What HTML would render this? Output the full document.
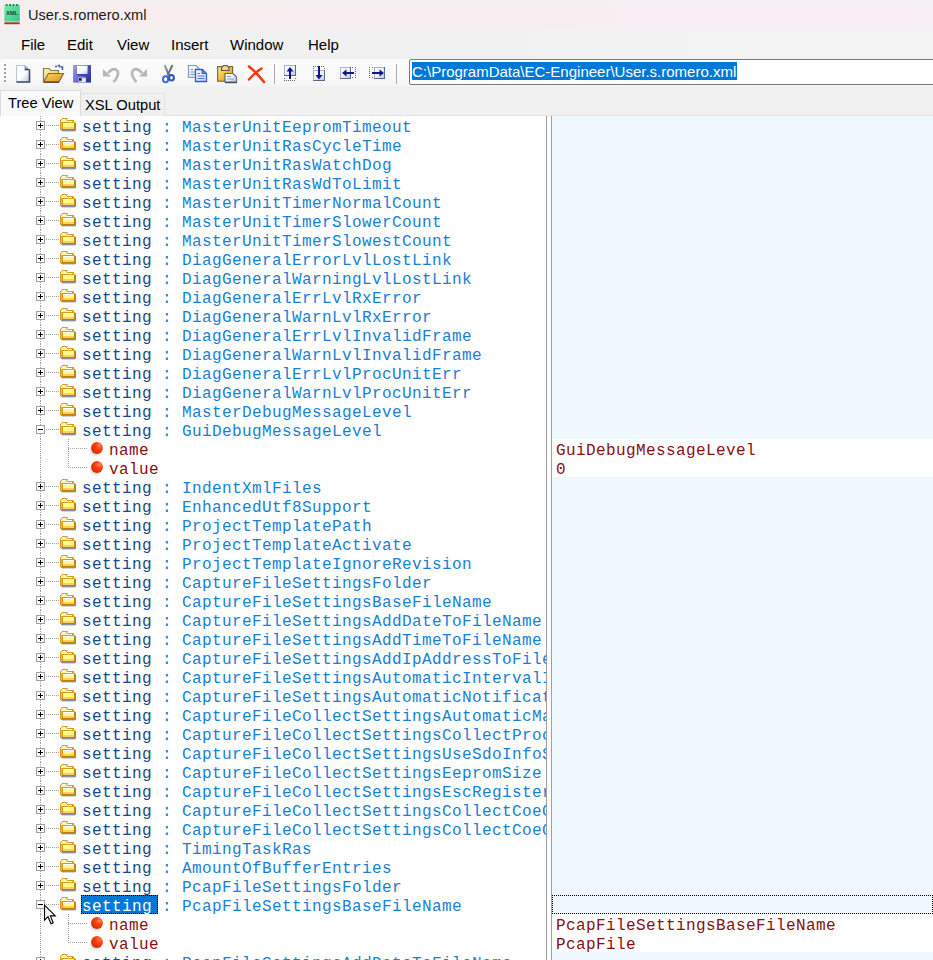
<!DOCTYPE html>
<html><head><meta charset="utf-8"><style>
*{box-sizing:border-box}
html,body{margin:0;padding:0}
body{width:933px;height:960px;overflow:hidden;position:relative;background:#f0f0f0;font-family:"Liberation Sans",sans-serif}
.abs{position:absolute}
#title{position:absolute;left:0;top:0;width:933px;height:29px;background:linear-gradient(90deg,#f8eeef 0%,#f8eef2 60%,#f8eef5 100%)}
#menu{position:absolute;left:0;top:29px;width:933px;height:30px;background:linear-gradient(90deg,#f0f0f0 0%,#f1f1f1 50%,#f3f3f3 78%,#f3f3f3 100%)}
.mi{position:absolute;top:0;font-size:15px;line-height:15px;color:#000;white-space:nowrap}
#tb{position:absolute;left:0;top:59px;width:725px;height:28px;background:linear-gradient(#fbfbfb,#f9f9f9 70%,#f3f3f3);border-top-left-radius:3px}
#tb2{position:absolute;left:725px;top:59px;width:208px;height:28px;background:#f3f3f3}
.tab{position:absolute;font-size:14.7px;line-height:15px;white-space:nowrap;color:#000}
#tree{position:absolute;left:0;top:116px;width:546px;height:844px;background:#fff;overflow:hidden}
#right{position:absolute;left:552px;top:116px;width:381px;height:844px;background:#f0f8ff;overflow:hidden}
.t{position:absolute;font-family:"Liberation Mono",monospace;font-size:16px;letter-spacing:0.4px;line-height:19px;height:19px;white-space:nowrap;padding-top:2.6px}
.el{color:#184888}
.nm{color:#1880d4}
.at{color:#861010}
.vl{color:#861010}
.vline{position:absolute;width:1px;background:repeating-linear-gradient(180deg,#a0a0a0 0 1px,transparent 1px 2px)}
.hline{position:absolute;height:1px;background:repeating-linear-gradient(90deg,#a0a0a0 0 1px,transparent 1px 2px)}
.box{position:absolute;width:9px;height:9px;border:1px solid #a0a0a0;background:#fff}
.box:before{content:"";position:absolute;left:1px;top:3px;width:5px;height:1px;background:#000}
.box.p:after{content:"";position:absolute;left:3px;top:1px;width:1px;height:5px;background:#000}
.fold{position:absolute}
.ball{position:absolute}
.wrow{position:absolute;left:0;width:381px;height:19px;background:#fff}
</style></head><body>

<div id="title"><div class="abs" style="left:0;top:0;width:933px;height:4px;background:linear-gradient(180deg,rgba(242,242,242,1),rgba(242,242,242,0))"></div>
<svg class="abs" style="left:3px;top:3px" width="19" height="23" viewBox="0 0 19 23">
<defs><linearGradient id="xg" x1="0" y1="0" x2="1" y2="1"><stop offset="0" stop-color="#78eab4"/><stop offset="1" stop-color="#38c282"/></linearGradient></defs>
<rect x="1.3" y="1.8" width="15.5" height="16.8" rx="0.6" fill="url(#xg)"/>
<rect x="2.8" y="1" width="1.8" height="2" rx="0.8" fill="#0e6a40"/><rect x="6.2" y="1" width="1.8" height="2" rx="0.8" fill="#0e6a40"/><rect x="9.6" y="1" width="1.8" height="2" rx="0.8" fill="#0e6a40"/><rect x="13" y="1" width="1.8" height="2" rx="0.8" fill="#0e6a40"/>
<text x="9" y="12.2" font-family="Liberation Sans" font-size="6.2" text-anchor="middle" fill="#0f4429" font-weight="bold" textLength="11.5" lengthAdjust="spacingAndGlyphs">XML</text>
<rect x="1.3" y="19.2" width="15.5" height="2" rx="0.8" fill="#904a18"/>
</svg>
<div class="abs" style="left:28px;top:8px;font-size:14.6px;line-height:15px;color:#1a1a1a;white-space:nowrap">User.s.romero.xml</div>
</div>

<div id="menu">
<div class="mi" style="left:21px;top:8px">File</div>
<div class="mi" style="left:67px;top:8px">Edit</div>
<div class="mi" style="left:117px;top:8px">View</div>
<div class="mi" style="left:171px;top:8px">Insert</div>
<div class="mi" style="left:230px;top:8px">Window</div>
<div class="mi" style="left:308px;top:8px">Help</div>
</div>
<div id="tb"></div><div id="tb2"></div>
<div class="abs" style="left:4px;top:64px;width:2px;height:2px;background:#a0a0a0;box-shadow:1px 1px 0 #fff"></div>
<div class="abs" style="left:4px;top:68px;width:2px;height:2px;background:#a0a0a0;box-shadow:1px 1px 0 #fff"></div>
<div class="abs" style="left:4px;top:72px;width:2px;height:2px;background:#a0a0a0;box-shadow:1px 1px 0 #fff"></div>
<div class="abs" style="left:4px;top:76px;width:2px;height:2px;background:#a0a0a0;box-shadow:1px 1px 0 #fff"></div>
<div class="abs" style="left:4px;top:80px;width:2px;height:2px;background:#a0a0a0;box-shadow:1px 1px 0 #fff"></div>
<div class="abs" style="left:15px;top:64px;line-height:0"><svg width="17" height="20" viewBox="0 0 17 20"><defs><linearGradient id="ng" x1="0" y1="0" x2="1" y2="1"><stop offset="0" stop-color="#fff"/><stop offset="0.55" stop-color="#fbfcfe"/><stop offset="1" stop-color="#b4c2de"/></linearGradient></defs><path d="M1.5 1.5 H10 L14.5 6 V18 H1.5 Z" fill="url(#ng)" stroke="#b8c4d8"/><path d="M14.5 5.5 V18 H1.5" fill="none" stroke="#3a4c6e" stroke-width="1.6"/><path d="M9.5 1 L15 6.5 H9.5 Z" fill="#8898b4"/><path d="M10 5.5 H14.5" stroke="#2e3e5e"/></svg></div>
<div class="abs" style="left:42px;top:64px;line-height:0"><svg width="23" height="20" viewBox="0 0 23 20"><defs><linearGradient id="ogb" x1="0" y1="0" x2="1" y2="1"><stop offset="0" stop-color="#fbf2a8"/><stop offset="1" stop-color="#e8c870"/></linearGradient><linearGradient id="og" x1="0" y1="0" x2="1" y2="1"><stop offset="0" stop-color="#ffd860"/><stop offset="1" stop-color="#e09018"/></linearGradient></defs><path d="M1.5 18 V4.5 H7 L9 6.5 H16.5 V10" fill="url(#ogb)" stroke="#8a7a5a" stroke-width="1.2"/><path d="M1.5 18 L6.5 9.5 H21.5 L17 18 Z" fill="url(#og)" stroke="#7a6a4a" stroke-width="1.2"/><path d="M2 18.2 H17" stroke="#4a3a1a" stroke-width="1.2"/><path d="M13 2.5 H15 M15.5 1.5 H17.5 V3.5 M18.5 3 H20.5 V6" stroke="#4a68a0" stroke-width="1.6" fill="none"/></svg></div>
<div class="abs" style="left:72px;top:64px;line-height:0"><svg width="20" height="20" viewBox="0 0 20 20"><defs><linearGradient id="sg" x1="0" y1="0" x2="1" y2="0.6"><stop offset="0" stop-color="#9c9cf8"/><stop offset="0.5" stop-color="#7070d8"/><stop offset="1" stop-color="#3434a0"/></linearGradient><linearGradient id="sl" x1="0" y1="0" x2="1" y2="1"><stop offset="0" stop-color="#fff"/><stop offset="0.6" stop-color="#f4f6fc"/><stop offset="1" stop-color="#b8c4e0"/></linearGradient></defs><rect x="1" y="1" width="18" height="17.6" fill="url(#sg)"/><rect x="5" y="1.8" width="10.5" height="8.4" fill="url(#sl)"/><rect x="5" y="10.2" width="10.5" height="1.2" fill="#2a3aa8"/><rect x="6.5" y="13.5" width="7.5" height="5" fill="#c8ccd8"/><rect x="7" y="14.2" width="2.5" height="2.5" fill="#111"/><rect x="10.5" y="14.5" width="2.6" height="3.4" fill="#e8f0fa"/><rect x="16.3" y="2.5" width="1.5" height="1.5" fill="#303078"/></svg></div>
<div class="abs" style="left:101px;top:64px;line-height:0"><svg width="20" height="20" viewBox="0 0 20 20"><path d="M7 9 Q11.5 4 15 5.5 Q18 7.5 16.5 12 Q15 15.5 12.5 18" fill="none" stroke="#b6b6b6" stroke-width="2.6"/><path d="M2 5 V12.5 H10 Z" fill="#b6b6b6"/></svg></div>
<div class="abs" style="left:129px;top:64px;line-height:0"><svg width="20" height="20" viewBox="0 0 20 20"><path d="M13 9 Q8.5 4 5 5.5 Q2 7.5 3.5 12 Q5 15.5 7.5 18" fill="none" stroke="#b6b6b6" stroke-width="2.6"/><path d="M18 5 V12.5 H10 Z" fill="#b6b6b6"/></svg></div>
<div class="abs" style="left:160px;top:64px;line-height:0"><svg width="16" height="20" viewBox="0 0 16 20"><defs><linearGradient id="cb" x1="0" y1="0" x2="1" y2="0"><stop offset="0" stop-color="#a0a8b8"/><stop offset="1" stop-color="#505a6a"/></linearGradient></defs><path d="M4.5 1 L9 11.5" stroke="url(#cb)" stroke-width="2"/><path d="M12.5 1 L7.5 11.5" stroke="#6a7486" stroke-width="2"/><ellipse cx="5.6" cy="15.2" rx="2.6" ry="3" fill="#fff" stroke="#3a6ad8" stroke-width="2"/><ellipse cx="11.5" cy="13.8" rx="2.4" ry="2.8" fill="#fff" stroke="#2c54b8" stroke-width="2"/></svg></div>
<div class="abs" style="left:187px;top:64px;line-height:0"><svg width="21" height="19" viewBox="0 0 21 19"><defs><linearGradient id="cp" x1="0" y1="0" x2="1" y2="1"><stop offset="0" stop-color="#fff"/><stop offset="1" stop-color="#c8d4ec"/></linearGradient></defs><path d="M1.5 1.5 H9 L12 4.5 V13.5 H1.5 Z" fill="url(#cp)" stroke="#8a9ab8" stroke-width="1.2"/><path d="M3.5 5.5 H6 M3.5 8 H9 M3.5 10.5 H9" stroke="#7aa0e0" stroke-width="1.1"/><path d="M8.5 5.5 H15.5 L19.5 9.5 V17.5 H8.5 Z" fill="url(#cp)" stroke="#3a5ec0" stroke-width="1.3"/><path d="M15 5.5 V9.5 H19.5" fill="#5a80d8" stroke="#3a5ec0"/><path d="M10.5 9.5 H13 M10.5 12 H17.5 M10.5 14.5 H17.5" stroke="#4a7ad8" stroke-width="1.2"/></svg></div>
<div class="abs" style="left:216px;top:64px;line-height:0"><svg width="23" height="20" viewBox="0 0 23 20"><defs><linearGradient id="pg" x1="0" y1="0" x2="1" y2="1"><stop offset="0" stop-color="#fbf0a0"/><stop offset="0.5" stop-color="#f4c030"/><stop offset="1" stop-color="#c88a10"/></linearGradient><linearGradient id="pd" x1="0" y1="0" x2="1" y2="1"><stop offset="0" stop-color="#fff"/><stop offset="0.5" stop-color="#eef2fa"/><stop offset="1" stop-color="#b0c0dc"/></linearGradient></defs><rect x="1.6" y="2.6" width="15" height="14.6" fill="url(#pg)" stroke="#7a6a4a" stroke-width="1.2"/><path d="M5.5 6.5 V4 L7.5 1.5 H11 L13 4 V6.5 Z" fill="#e8d890" stroke="#6a5a3a" stroke-width="1.2"/><path d="M9 17.8 V9.5 H17 L20.5 13 V18.2 Z" fill="url(#pd)" stroke="#5a6a88" stroke-width="1.2"/><path d="M9 18.6 H20.8" stroke="#4a4a4a" stroke-width="1.2"/><path d="M11 12.5 H15 M11 15 H18" stroke="#8a9ab8"/></svg></div>
<div class="abs" style="left:246px;top:64px;line-height:0"><svg width="20" height="20" viewBox="0 0 20 20"><path d="M3 2.5 Q10 8 18 18" stroke="#f23a0a" stroke-width="2.6" stroke-linecap="round" fill="none"/><path d="M15.5 4.5 Q9 8.5 3 15.5" stroke="#ee3a0a" stroke-width="2.4" stroke-linecap="round" fill="none"/></svg></div>
<div class="abs" style="left:283px;top:64px;line-height:0"><svg width="14" height="19" viewBox="0 0 14 19" shape-rendering="crispEdges"><defs><linearGradient id="bx" x1="0" y1="0" x2="1" y2="1"><stop offset="0" stop-color="#fff"/><stop offset="0.5" stop-color="#eef2fa"/><stop offset="1" stop-color="#b0c0dc"/></linearGradient></defs><rect x="1" y="1" width="12" height="11" fill="url(#bx)"/><rect x="1" y="1" width="12" height="1" fill="#a8b4cc"/><rect x="1" y="1" width="1" height="11" fill="#a8b4cc"/><rect x="12" y="1" width="1" height="11" fill="#5a6a8a"/><rect x="1" y="11" width="12" height="1" fill="#5a6a8a"/><path d="M1 14 h1 M12 14 h1 M1 16 h1 M3 16 h1 M5 16 h1 M7 16 h1 M9 16 h1 M11 16 h1" stroke="#606878" stroke-width="1"/><rect x="6" y="4" width="2" height="11" fill="#14148c"/><path d="M3.5 7.5 L7 3 L10.5 7.5 Z" fill="#14148c" shape-rendering="auto"/></svg></div>
<div class="abs" style="left:312px;top:64px;line-height:0"><svg width="14" height="19" viewBox="0 0 14 19" shape-rendering="crispEdges"><defs><linearGradient id="bx2" x1="0" y1="0" x2="1" y2="1"><stop offset="0" stop-color="#fff"/><stop offset="0.5" stop-color="#eef2fa"/><stop offset="1" stop-color="#b0c0dc"/></linearGradient></defs><path d="M1 2 h1 M3 2 h1 M5 2 h1 M7 2 h1 M9 2 h1 M11 2 h1 M1 4 h1 M12 4 h1" stroke="#606878" stroke-width="1"/><rect x="1" y="6" width="12" height="11" fill="url(#bx2)"/><rect x="1" y="6" width="12" height="1" fill="#a8b4cc"/><rect x="1" y="6" width="1" height="11" fill="#a8b4cc"/><rect x="12" y="6" width="1" height="11" fill="#5a6a8a"/><rect x="1" y="16" width="12" height="1" fill="#5a6a8a"/><rect x="6" y="2" width="2" height="11" fill="#14148c"/><path d="M3.5 11 L7 15.5 L10.5 11 Z" fill="#14148c" shape-rendering="auto"/></svg></div>
<div class="abs" style="left:339px;top:66px;line-height:0"><svg width="19" height="14" viewBox="0 0 19 14" shape-rendering="crispEdges"><defs><linearGradient id="bx3" x1="0" y1="0" x2="1" y2="1"><stop offset="0" stop-color="#fff"/><stop offset="0.5" stop-color="#eef2fa"/><stop offset="1" stop-color="#b0c0dc"/></linearGradient></defs><rect x="1" y="1" width="11" height="12" fill="url(#bx3)"/><rect x="1" y="1" width="11" height="1" fill="#a8b4cc"/><rect x="1" y="1" width="1" height="12" fill="#a8b4cc"/><rect x="11" y="1" width="1" height="12" fill="#5a6a8a"/><rect x="1" y="12" width="11" height="1" fill="#5a6a8a"/><path d="M13 1.5 h1 M16 1.5 h1 M16 3.5 h1 M16 5.5 h1 M16 7.5 h1 M16 9.5 h1 M13 11.5 h1 M16 11.5 h1" stroke="#606878"/><rect x="5" y="6" width="10" height="2" fill="#14148c"/><path d="M7.5 3.5 L3 7 L7.5 10.5 Z" fill="#14148c" shape-rendering="auto"/></svg></div>
<div class="abs" style="left:368px;top:66px;line-height:0"><svg width="19" height="14" viewBox="0 0 19 14" shape-rendering="crispEdges"><defs><linearGradient id="bx4" x1="0" y1="0" x2="1" y2="1"><stop offset="0" stop-color="#fff"/><stop offset="0.5" stop-color="#eef2fa"/><stop offset="1" stop-color="#b0c0dc"/></linearGradient></defs><path d="M1 1.5 h1 M4 1.5 h1 M1 3.5 h1 M1 5.5 h1 M1 7.5 h1 M1 9.5 h1 M1 11.5 h1 M4 11.5 h1" stroke="#606878"/><rect x="6" y="1" width="11" height="12" fill="url(#bx4)"/><rect x="6" y="1" width="11" height="1" fill="#a8b4cc"/><rect x="6" y="1" width="1" height="12" fill="#a8b4cc"/><rect x="16" y="1" width="1" height="12" fill="#5a6a8a"/><rect x="6" y="12" width="11" height="1" fill="#5a6a8a"/><rect x="4" y="6" width="10" height="2" fill="#14148c"/><path d="M11.5 3.5 L16 7 L11.5 10.5 Z" fill="#14148c" shape-rendering="auto"/></svg></div>
<div class="abs" style="left:274px;top:64px;width:1px;height:20px;background:#a8a8a8"></div>
<div class="abs" style="left:396px;top:64px;width:1px;height:20px;background:#a8a8a8"></div>
<div class="abs" style="left:409px;top:59px;width:530px;height:26px;background:#fff;border:1px solid #7a7a7a;border-radius:2px"></div>
<div class="abs" style="left:412px;top:62px;width:325px;height:18px;background:#0078d7"></div>
<div class="abs" style="left:412px;top:64px;font-size:15px;line-height:15px;color:#fff;white-space:nowrap">C:\ProgramData\EC-Engineer\User.s.romero.xml</div>
<div class="abs" style="left:0;top:115px;width:933px;height:1px;background:#e3e3e3"></div>
<div class="abs" style="left:80px;top:93px;width:85px;height:23px;background:#f0f0f0;border:1px solid #e3e3e3;border-bottom:none"></div>
<div class="abs" style="left:0;top:90px;width:81px;height:26px;background:#f9f9f9;border:1px solid #dcdcdc;border-bottom:none"></div>
<div class="tab" style="left:8px;top:96px">Tree View</div>
<div class="tab" style="left:85px;top:98px">XSL Output</div>
<div id="tree">
<div class="vline" style="left:40px;top:0px;height:19px"></div>
<div class="hline" style="left:46px;top:9px;width:14px"></div>
<div class="box p" style="left:36px;top:5px"></div>
<div class="fold" style="left:59px;top:1px;line-height:0"><svg class="fold" width="18" height="16" viewBox="59 117 18 16" shape-rendering="crispEdges"><rect x="75" y="123" width="1" height="7" fill="#5a6270" opacity=".75"/><rect x="61" y="130" width="15" height="1" fill="#5a6270" opacity=".7"/><rect x="62" y="131" width="13" height="1" fill="#9aa0aa" opacity=".45"/><rect x="66" y="118" width="2" height="1" fill="#a8b0c0"/><rect x="73" y="120" width="1" height="2" fill="#a8b0c0"/><rect x="62" y="118" width="4" height="1" fill="#d89a20"/><rect x="61" y="119" width="1" height="1" fill="#d89a20"/><rect x="62" y="119" width="4" height="1" fill="#fffbe0"/><rect x="66" y="119" width="1" height="1" fill="#d89a20"/><rect x="60" y="120" width="1" height="10" fill="#d89a20"/><rect x="61" y="120" width="6" height="2" fill="#fff6a0"/><rect x="67" y="120" width="6" height="1" fill="#d89a20"/><rect x="67" y="121" width="5" height="1" fill="#ffffff"/><rect x="72" y="121" width="1" height="1" fill="#d89a20"/><rect x="61" y="122" width="1" height="8" fill="#eab444"/><rect x="62" y="122" width="13" height="1" fill="#d89a20"/><rect x="62" y="123" width="1" height="7" fill="#d89a20"/><rect x="74" y="123" width="1" height="7" fill="#c88410"/><rect x="63" y="123" width="11" height="1" fill="#ffffff"/><rect x="63" y="124" width="11" height="3" fill="#fffa8c"/><rect x="63" y="127" width="11" height="2" fill="#ffd060"/><rect x="62" y="129" width="13" height="1" fill="#c07c08"/></svg></div>
<div class="t" style="left:82px;top:0px"><span class="el">setting</span><span class="nm"> : MasterUnitEepromTimeout</span></div>
<div class="vline" style="left:40px;top:19px;height:19px"></div>
<div class="hline" style="left:46px;top:28px;width:14px"></div>
<div class="box p" style="left:36px;top:24px"></div>
<div class="fold" style="left:59px;top:20px;line-height:0"><svg class="fold" width="18" height="16" viewBox="59 117 18 16" shape-rendering="crispEdges"><rect x="75" y="123" width="1" height="7" fill="#5a6270" opacity=".75"/><rect x="61" y="130" width="15" height="1" fill="#5a6270" opacity=".7"/><rect x="62" y="131" width="13" height="1" fill="#9aa0aa" opacity=".45"/><rect x="66" y="118" width="2" height="1" fill="#a8b0c0"/><rect x="73" y="120" width="1" height="2" fill="#a8b0c0"/><rect x="62" y="118" width="4" height="1" fill="#d89a20"/><rect x="61" y="119" width="1" height="1" fill="#d89a20"/><rect x="62" y="119" width="4" height="1" fill="#fffbe0"/><rect x="66" y="119" width="1" height="1" fill="#d89a20"/><rect x="60" y="120" width="1" height="10" fill="#d89a20"/><rect x="61" y="120" width="6" height="2" fill="#fff6a0"/><rect x="67" y="120" width="6" height="1" fill="#d89a20"/><rect x="67" y="121" width="5" height="1" fill="#ffffff"/><rect x="72" y="121" width="1" height="1" fill="#d89a20"/><rect x="61" y="122" width="1" height="8" fill="#eab444"/><rect x="62" y="122" width="13" height="1" fill="#d89a20"/><rect x="62" y="123" width="1" height="7" fill="#d89a20"/><rect x="74" y="123" width="1" height="7" fill="#c88410"/><rect x="63" y="123" width="11" height="1" fill="#ffffff"/><rect x="63" y="124" width="11" height="3" fill="#fffa8c"/><rect x="63" y="127" width="11" height="2" fill="#ffd060"/><rect x="62" y="129" width="13" height="1" fill="#c07c08"/></svg></div>
<div class="t" style="left:82px;top:19px"><span class="el">setting</span><span class="nm"> : MasterUnitRasCycleTime</span></div>
<div class="vline" style="left:40px;top:38px;height:19px"></div>
<div class="hline" style="left:46px;top:47px;width:14px"></div>
<div class="box p" style="left:36px;top:43px"></div>
<div class="fold" style="left:59px;top:39px;line-height:0"><svg class="fold" width="18" height="16" viewBox="59 117 18 16" shape-rendering="crispEdges"><rect x="75" y="123" width="1" height="7" fill="#5a6270" opacity=".75"/><rect x="61" y="130" width="15" height="1" fill="#5a6270" opacity=".7"/><rect x="62" y="131" width="13" height="1" fill="#9aa0aa" opacity=".45"/><rect x="66" y="118" width="2" height="1" fill="#a8b0c0"/><rect x="73" y="120" width="1" height="2" fill="#a8b0c0"/><rect x="62" y="118" width="4" height="1" fill="#d89a20"/><rect x="61" y="119" width="1" height="1" fill="#d89a20"/><rect x="62" y="119" width="4" height="1" fill="#fffbe0"/><rect x="66" y="119" width="1" height="1" fill="#d89a20"/><rect x="60" y="120" width="1" height="10" fill="#d89a20"/><rect x="61" y="120" width="6" height="2" fill="#fff6a0"/><rect x="67" y="120" width="6" height="1" fill="#d89a20"/><rect x="67" y="121" width="5" height="1" fill="#ffffff"/><rect x="72" y="121" width="1" height="1" fill="#d89a20"/><rect x="61" y="122" width="1" height="8" fill="#eab444"/><rect x="62" y="122" width="13" height="1" fill="#d89a20"/><rect x="62" y="123" width="1" height="7" fill="#d89a20"/><rect x="74" y="123" width="1" height="7" fill="#c88410"/><rect x="63" y="123" width="11" height="1" fill="#ffffff"/><rect x="63" y="124" width="11" height="3" fill="#fffa8c"/><rect x="63" y="127" width="11" height="2" fill="#ffd060"/><rect x="62" y="129" width="13" height="1" fill="#c07c08"/></svg></div>
<div class="t" style="left:82px;top:38px"><span class="el">setting</span><span class="nm"> : MasterUnitRasWatchDog</span></div>
<div class="vline" style="left:40px;top:57px;height:19px"></div>
<div class="hline" style="left:46px;top:66px;width:14px"></div>
<div class="box p" style="left:36px;top:62px"></div>
<div class="fold" style="left:59px;top:58px;line-height:0"><svg class="fold" width="18" height="16" viewBox="59 117 18 16" shape-rendering="crispEdges"><rect x="75" y="123" width="1" height="7" fill="#5a6270" opacity=".75"/><rect x="61" y="130" width="15" height="1" fill="#5a6270" opacity=".7"/><rect x="62" y="131" width="13" height="1" fill="#9aa0aa" opacity=".45"/><rect x="66" y="118" width="2" height="1" fill="#a8b0c0"/><rect x="73" y="120" width="1" height="2" fill="#a8b0c0"/><rect x="62" y="118" width="4" height="1" fill="#d89a20"/><rect x="61" y="119" width="1" height="1" fill="#d89a20"/><rect x="62" y="119" width="4" height="1" fill="#fffbe0"/><rect x="66" y="119" width="1" height="1" fill="#d89a20"/><rect x="60" y="120" width="1" height="10" fill="#d89a20"/><rect x="61" y="120" width="6" height="2" fill="#fff6a0"/><rect x="67" y="120" width="6" height="1" fill="#d89a20"/><rect x="67" y="121" width="5" height="1" fill="#ffffff"/><rect x="72" y="121" width="1" height="1" fill="#d89a20"/><rect x="61" y="122" width="1" height="8" fill="#eab444"/><rect x="62" y="122" width="13" height="1" fill="#d89a20"/><rect x="62" y="123" width="1" height="7" fill="#d89a20"/><rect x="74" y="123" width="1" height="7" fill="#c88410"/><rect x="63" y="123" width="11" height="1" fill="#ffffff"/><rect x="63" y="124" width="11" height="3" fill="#fffa8c"/><rect x="63" y="127" width="11" height="2" fill="#ffd060"/><rect x="62" y="129" width="13" height="1" fill="#c07c08"/></svg></div>
<div class="t" style="left:82px;top:57px"><span class="el">setting</span><span class="nm"> : MasterUnitRasWdToLimit</span></div>
<div class="vline" style="left:40px;top:76px;height:19px"></div>
<div class="hline" style="left:46px;top:85px;width:14px"></div>
<div class="box p" style="left:36px;top:81px"></div>
<div class="fold" style="left:59px;top:77px;line-height:0"><svg class="fold" width="18" height="16" viewBox="59 117 18 16" shape-rendering="crispEdges"><rect x="75" y="123" width="1" height="7" fill="#5a6270" opacity=".75"/><rect x="61" y="130" width="15" height="1" fill="#5a6270" opacity=".7"/><rect x="62" y="131" width="13" height="1" fill="#9aa0aa" opacity=".45"/><rect x="66" y="118" width="2" height="1" fill="#a8b0c0"/><rect x="73" y="120" width="1" height="2" fill="#a8b0c0"/><rect x="62" y="118" width="4" height="1" fill="#d89a20"/><rect x="61" y="119" width="1" height="1" fill="#d89a20"/><rect x="62" y="119" width="4" height="1" fill="#fffbe0"/><rect x="66" y="119" width="1" height="1" fill="#d89a20"/><rect x="60" y="120" width="1" height="10" fill="#d89a20"/><rect x="61" y="120" width="6" height="2" fill="#fff6a0"/><rect x="67" y="120" width="6" height="1" fill="#d89a20"/><rect x="67" y="121" width="5" height="1" fill="#ffffff"/><rect x="72" y="121" width="1" height="1" fill="#d89a20"/><rect x="61" y="122" width="1" height="8" fill="#eab444"/><rect x="62" y="122" width="13" height="1" fill="#d89a20"/><rect x="62" y="123" width="1" height="7" fill="#d89a20"/><rect x="74" y="123" width="1" height="7" fill="#c88410"/><rect x="63" y="123" width="11" height="1" fill="#ffffff"/><rect x="63" y="124" width="11" height="3" fill="#fffa8c"/><rect x="63" y="127" width="11" height="2" fill="#ffd060"/><rect x="62" y="129" width="13" height="1" fill="#c07c08"/></svg></div>
<div class="t" style="left:82px;top:76px"><span class="el">setting</span><span class="nm"> : MasterUnitTimerNormalCount</span></div>
<div class="vline" style="left:40px;top:95px;height:19px"></div>
<div class="hline" style="left:46px;top:104px;width:14px"></div>
<div class="box p" style="left:36px;top:100px"></div>
<div class="fold" style="left:59px;top:96px;line-height:0"><svg class="fold" width="18" height="16" viewBox="59 117 18 16" shape-rendering="crispEdges"><rect x="75" y="123" width="1" height="7" fill="#5a6270" opacity=".75"/><rect x="61" y="130" width="15" height="1" fill="#5a6270" opacity=".7"/><rect x="62" y="131" width="13" height="1" fill="#9aa0aa" opacity=".45"/><rect x="66" y="118" width="2" height="1" fill="#a8b0c0"/><rect x="73" y="120" width="1" height="2" fill="#a8b0c0"/><rect x="62" y="118" width="4" height="1" fill="#d89a20"/><rect x="61" y="119" width="1" height="1" fill="#d89a20"/><rect x="62" y="119" width="4" height="1" fill="#fffbe0"/><rect x="66" y="119" width="1" height="1" fill="#d89a20"/><rect x="60" y="120" width="1" height="10" fill="#d89a20"/><rect x="61" y="120" width="6" height="2" fill="#fff6a0"/><rect x="67" y="120" width="6" height="1" fill="#d89a20"/><rect x="67" y="121" width="5" height="1" fill="#ffffff"/><rect x="72" y="121" width="1" height="1" fill="#d89a20"/><rect x="61" y="122" width="1" height="8" fill="#eab444"/><rect x="62" y="122" width="13" height="1" fill="#d89a20"/><rect x="62" y="123" width="1" height="7" fill="#d89a20"/><rect x="74" y="123" width="1" height="7" fill="#c88410"/><rect x="63" y="123" width="11" height="1" fill="#ffffff"/><rect x="63" y="124" width="11" height="3" fill="#fffa8c"/><rect x="63" y="127" width="11" height="2" fill="#ffd060"/><rect x="62" y="129" width="13" height="1" fill="#c07c08"/></svg></div>
<div class="t" style="left:82px;top:95px"><span class="el">setting</span><span class="nm"> : MasterUnitTimerSlowerCount</span></div>
<div class="vline" style="left:40px;top:114px;height:19px"></div>
<div class="hline" style="left:46px;top:123px;width:14px"></div>
<div class="box p" style="left:36px;top:119px"></div>
<div class="fold" style="left:59px;top:115px;line-height:0"><svg class="fold" width="18" height="16" viewBox="59 117 18 16" shape-rendering="crispEdges"><rect x="75" y="123" width="1" height="7" fill="#5a6270" opacity=".75"/><rect x="61" y="130" width="15" height="1" fill="#5a6270" opacity=".7"/><rect x="62" y="131" width="13" height="1" fill="#9aa0aa" opacity=".45"/><rect x="66" y="118" width="2" height="1" fill="#a8b0c0"/><rect x="73" y="120" width="1" height="2" fill="#a8b0c0"/><rect x="62" y="118" width="4" height="1" fill="#d89a20"/><rect x="61" y="119" width="1" height="1" fill="#d89a20"/><rect x="62" y="119" width="4" height="1" fill="#fffbe0"/><rect x="66" y="119" width="1" height="1" fill="#d89a20"/><rect x="60" y="120" width="1" height="10" fill="#d89a20"/><rect x="61" y="120" width="6" height="2" fill="#fff6a0"/><rect x="67" y="120" width="6" height="1" fill="#d89a20"/><rect x="67" y="121" width="5" height="1" fill="#ffffff"/><rect x="72" y="121" width="1" height="1" fill="#d89a20"/><rect x="61" y="122" width="1" height="8" fill="#eab444"/><rect x="62" y="122" width="13" height="1" fill="#d89a20"/><rect x="62" y="123" width="1" height="7" fill="#d89a20"/><rect x="74" y="123" width="1" height="7" fill="#c88410"/><rect x="63" y="123" width="11" height="1" fill="#ffffff"/><rect x="63" y="124" width="11" height="3" fill="#fffa8c"/><rect x="63" y="127" width="11" height="2" fill="#ffd060"/><rect x="62" y="129" width="13" height="1" fill="#c07c08"/></svg></div>
<div class="t" style="left:82px;top:114px"><span class="el">setting</span><span class="nm"> : MasterUnitTimerSlowestCount</span></div>
<div class="vline" style="left:40px;top:133px;height:19px"></div>
<div class="hline" style="left:46px;top:142px;width:14px"></div>
<div class="box p" style="left:36px;top:138px"></div>
<div class="fold" style="left:59px;top:134px;line-height:0"><svg class="fold" width="18" height="16" viewBox="59 117 18 16" shape-rendering="crispEdges"><rect x="75" y="123" width="1" height="7" fill="#5a6270" opacity=".75"/><rect x="61" y="130" width="15" height="1" fill="#5a6270" opacity=".7"/><rect x="62" y="131" width="13" height="1" fill="#9aa0aa" opacity=".45"/><rect x="66" y="118" width="2" height="1" fill="#a8b0c0"/><rect x="73" y="120" width="1" height="2" fill="#a8b0c0"/><rect x="62" y="118" width="4" height="1" fill="#d89a20"/><rect x="61" y="119" width="1" height="1" fill="#d89a20"/><rect x="62" y="119" width="4" height="1" fill="#fffbe0"/><rect x="66" y="119" width="1" height="1" fill="#d89a20"/><rect x="60" y="120" width="1" height="10" fill="#d89a20"/><rect x="61" y="120" width="6" height="2" fill="#fff6a0"/><rect x="67" y="120" width="6" height="1" fill="#d89a20"/><rect x="67" y="121" width="5" height="1" fill="#ffffff"/><rect x="72" y="121" width="1" height="1" fill="#d89a20"/><rect x="61" y="122" width="1" height="8" fill="#eab444"/><rect x="62" y="122" width="13" height="1" fill="#d89a20"/><rect x="62" y="123" width="1" height="7" fill="#d89a20"/><rect x="74" y="123" width="1" height="7" fill="#c88410"/><rect x="63" y="123" width="11" height="1" fill="#ffffff"/><rect x="63" y="124" width="11" height="3" fill="#fffa8c"/><rect x="63" y="127" width="11" height="2" fill="#ffd060"/><rect x="62" y="129" width="13" height="1" fill="#c07c08"/></svg></div>
<div class="t" style="left:82px;top:133px"><span class="el">setting</span><span class="nm"> : DiagGeneralErrorLvlLostLink</span></div>
<div class="vline" style="left:40px;top:152px;height:19px"></div>
<div class="hline" style="left:46px;top:161px;width:14px"></div>
<div class="box p" style="left:36px;top:157px"></div>
<div class="fold" style="left:59px;top:153px;line-height:0"><svg class="fold" width="18" height="16" viewBox="59 117 18 16" shape-rendering="crispEdges"><rect x="75" y="123" width="1" height="7" fill="#5a6270" opacity=".75"/><rect x="61" y="130" width="15" height="1" fill="#5a6270" opacity=".7"/><rect x="62" y="131" width="13" height="1" fill="#9aa0aa" opacity=".45"/><rect x="66" y="118" width="2" height="1" fill="#a8b0c0"/><rect x="73" y="120" width="1" height="2" fill="#a8b0c0"/><rect x="62" y="118" width="4" height="1" fill="#d89a20"/><rect x="61" y="119" width="1" height="1" fill="#d89a20"/><rect x="62" y="119" width="4" height="1" fill="#fffbe0"/><rect x="66" y="119" width="1" height="1" fill="#d89a20"/><rect x="60" y="120" width="1" height="10" fill="#d89a20"/><rect x="61" y="120" width="6" height="2" fill="#fff6a0"/><rect x="67" y="120" width="6" height="1" fill="#d89a20"/><rect x="67" y="121" width="5" height="1" fill="#ffffff"/><rect x="72" y="121" width="1" height="1" fill="#d89a20"/><rect x="61" y="122" width="1" height="8" fill="#eab444"/><rect x="62" y="122" width="13" height="1" fill="#d89a20"/><rect x="62" y="123" width="1" height="7" fill="#d89a20"/><rect x="74" y="123" width="1" height="7" fill="#c88410"/><rect x="63" y="123" width="11" height="1" fill="#ffffff"/><rect x="63" y="124" width="11" height="3" fill="#fffa8c"/><rect x="63" y="127" width="11" height="2" fill="#ffd060"/><rect x="62" y="129" width="13" height="1" fill="#c07c08"/></svg></div>
<div class="t" style="left:82px;top:152px"><span class="el">setting</span><span class="nm"> : DiagGeneralWarningLvlLostLink</span></div>
<div class="vline" style="left:40px;top:171px;height:19px"></div>
<div class="hline" style="left:46px;top:180px;width:14px"></div>
<div class="box p" style="left:36px;top:176px"></div>
<div class="fold" style="left:59px;top:172px;line-height:0"><svg class="fold" width="18" height="16" viewBox="59 117 18 16" shape-rendering="crispEdges"><rect x="75" y="123" width="1" height="7" fill="#5a6270" opacity=".75"/><rect x="61" y="130" width="15" height="1" fill="#5a6270" opacity=".7"/><rect x="62" y="131" width="13" height="1" fill="#9aa0aa" opacity=".45"/><rect x="66" y="118" width="2" height="1" fill="#a8b0c0"/><rect x="73" y="120" width="1" height="2" fill="#a8b0c0"/><rect x="62" y="118" width="4" height="1" fill="#d89a20"/><rect x="61" y="119" width="1" height="1" fill="#d89a20"/><rect x="62" y="119" width="4" height="1" fill="#fffbe0"/><rect x="66" y="119" width="1" height="1" fill="#d89a20"/><rect x="60" y="120" width="1" height="10" fill="#d89a20"/><rect x="61" y="120" width="6" height="2" fill="#fff6a0"/><rect x="67" y="120" width="6" height="1" fill="#d89a20"/><rect x="67" y="121" width="5" height="1" fill="#ffffff"/><rect x="72" y="121" width="1" height="1" fill="#d89a20"/><rect x="61" y="122" width="1" height="8" fill="#eab444"/><rect x="62" y="122" width="13" height="1" fill="#d89a20"/><rect x="62" y="123" width="1" height="7" fill="#d89a20"/><rect x="74" y="123" width="1" height="7" fill="#c88410"/><rect x="63" y="123" width="11" height="1" fill="#ffffff"/><rect x="63" y="124" width="11" height="3" fill="#fffa8c"/><rect x="63" y="127" width="11" height="2" fill="#ffd060"/><rect x="62" y="129" width="13" height="1" fill="#c07c08"/></svg></div>
<div class="t" style="left:82px;top:171px"><span class="el">setting</span><span class="nm"> : DiagGeneralErrLvlRxError</span></div>
<div class="vline" style="left:40px;top:190px;height:19px"></div>
<div class="hline" style="left:46px;top:199px;width:14px"></div>
<div class="box p" style="left:36px;top:195px"></div>
<div class="fold" style="left:59px;top:191px;line-height:0"><svg class="fold" width="18" height="16" viewBox="59 117 18 16" shape-rendering="crispEdges"><rect x="75" y="123" width="1" height="7" fill="#5a6270" opacity=".75"/><rect x="61" y="130" width="15" height="1" fill="#5a6270" opacity=".7"/><rect x="62" y="131" width="13" height="1" fill="#9aa0aa" opacity=".45"/><rect x="66" y="118" width="2" height="1" fill="#a8b0c0"/><rect x="73" y="120" width="1" height="2" fill="#a8b0c0"/><rect x="62" y="118" width="4" height="1" fill="#d89a20"/><rect x="61" y="119" width="1" height="1" fill="#d89a20"/><rect x="62" y="119" width="4" height="1" fill="#fffbe0"/><rect x="66" y="119" width="1" height="1" fill="#d89a20"/><rect x="60" y="120" width="1" height="10" fill="#d89a20"/><rect x="61" y="120" width="6" height="2" fill="#fff6a0"/><rect x="67" y="120" width="6" height="1" fill="#d89a20"/><rect x="67" y="121" width="5" height="1" fill="#ffffff"/><rect x="72" y="121" width="1" height="1" fill="#d89a20"/><rect x="61" y="122" width="1" height="8" fill="#eab444"/><rect x="62" y="122" width="13" height="1" fill="#d89a20"/><rect x="62" y="123" width="1" height="7" fill="#d89a20"/><rect x="74" y="123" width="1" height="7" fill="#c88410"/><rect x="63" y="123" width="11" height="1" fill="#ffffff"/><rect x="63" y="124" width="11" height="3" fill="#fffa8c"/><rect x="63" y="127" width="11" height="2" fill="#ffd060"/><rect x="62" y="129" width="13" height="1" fill="#c07c08"/></svg></div>
<div class="t" style="left:82px;top:190px"><span class="el">setting</span><span class="nm"> : DiagGeneralWarnLvlRxError</span></div>
<div class="vline" style="left:40px;top:209px;height:19px"></div>
<div class="hline" style="left:46px;top:218px;width:14px"></div>
<div class="box p" style="left:36px;top:214px"></div>
<div class="fold" style="left:59px;top:210px;line-height:0"><svg class="fold" width="18" height="16" viewBox="59 117 18 16" shape-rendering="crispEdges"><rect x="75" y="123" width="1" height="7" fill="#5a6270" opacity=".75"/><rect x="61" y="130" width="15" height="1" fill="#5a6270" opacity=".7"/><rect x="62" y="131" width="13" height="1" fill="#9aa0aa" opacity=".45"/><rect x="66" y="118" width="2" height="1" fill="#a8b0c0"/><rect x="73" y="120" width="1" height="2" fill="#a8b0c0"/><rect x="62" y="118" width="4" height="1" fill="#d89a20"/><rect x="61" y="119" width="1" height="1" fill="#d89a20"/><rect x="62" y="119" width="4" height="1" fill="#fffbe0"/><rect x="66" y="119" width="1" height="1" fill="#d89a20"/><rect x="60" y="120" width="1" height="10" fill="#d89a20"/><rect x="61" y="120" width="6" height="2" fill="#fff6a0"/><rect x="67" y="120" width="6" height="1" fill="#d89a20"/><rect x="67" y="121" width="5" height="1" fill="#ffffff"/><rect x="72" y="121" width="1" height="1" fill="#d89a20"/><rect x="61" y="122" width="1" height="8" fill="#eab444"/><rect x="62" y="122" width="13" height="1" fill="#d89a20"/><rect x="62" y="123" width="1" height="7" fill="#d89a20"/><rect x="74" y="123" width="1" height="7" fill="#c88410"/><rect x="63" y="123" width="11" height="1" fill="#ffffff"/><rect x="63" y="124" width="11" height="3" fill="#fffa8c"/><rect x="63" y="127" width="11" height="2" fill="#ffd060"/><rect x="62" y="129" width="13" height="1" fill="#c07c08"/></svg></div>
<div class="t" style="left:82px;top:209px"><span class="el">setting</span><span class="nm"> : DiagGeneralErrLvlInvalidFrame</span></div>
<div class="vline" style="left:40px;top:228px;height:19px"></div>
<div class="hline" style="left:46px;top:237px;width:14px"></div>
<div class="box p" style="left:36px;top:233px"></div>
<div class="fold" style="left:59px;top:229px;line-height:0"><svg class="fold" width="18" height="16" viewBox="59 117 18 16" shape-rendering="crispEdges"><rect x="75" y="123" width="1" height="7" fill="#5a6270" opacity=".75"/><rect x="61" y="130" width="15" height="1" fill="#5a6270" opacity=".7"/><rect x="62" y="131" width="13" height="1" fill="#9aa0aa" opacity=".45"/><rect x="66" y="118" width="2" height="1" fill="#a8b0c0"/><rect x="73" y="120" width="1" height="2" fill="#a8b0c0"/><rect x="62" y="118" width="4" height="1" fill="#d89a20"/><rect x="61" y="119" width="1" height="1" fill="#d89a20"/><rect x="62" y="119" width="4" height="1" fill="#fffbe0"/><rect x="66" y="119" width="1" height="1" fill="#d89a20"/><rect x="60" y="120" width="1" height="10" fill="#d89a20"/><rect x="61" y="120" width="6" height="2" fill="#fff6a0"/><rect x="67" y="120" width="6" height="1" fill="#d89a20"/><rect x="67" y="121" width="5" height="1" fill="#ffffff"/><rect x="72" y="121" width="1" height="1" fill="#d89a20"/><rect x="61" y="122" width="1" height="8" fill="#eab444"/><rect x="62" y="122" width="13" height="1" fill="#d89a20"/><rect x="62" y="123" width="1" height="7" fill="#d89a20"/><rect x="74" y="123" width="1" height="7" fill="#c88410"/><rect x="63" y="123" width="11" height="1" fill="#ffffff"/><rect x="63" y="124" width="11" height="3" fill="#fffa8c"/><rect x="63" y="127" width="11" height="2" fill="#ffd060"/><rect x="62" y="129" width="13" height="1" fill="#c07c08"/></svg></div>
<div class="t" style="left:82px;top:228px"><span class="el">setting</span><span class="nm"> : DiagGeneralWarnLvlInvalidFrame</span></div>
<div class="vline" style="left:40px;top:247px;height:19px"></div>
<div class="hline" style="left:46px;top:256px;width:14px"></div>
<div class="box p" style="left:36px;top:252px"></div>
<div class="fold" style="left:59px;top:248px;line-height:0"><svg class="fold" width="18" height="16" viewBox="59 117 18 16" shape-rendering="crispEdges"><rect x="75" y="123" width="1" height="7" fill="#5a6270" opacity=".75"/><rect x="61" y="130" width="15" height="1" fill="#5a6270" opacity=".7"/><rect x="62" y="131" width="13" height="1" fill="#9aa0aa" opacity=".45"/><rect x="66" y="118" width="2" height="1" fill="#a8b0c0"/><rect x="73" y="120" width="1" height="2" fill="#a8b0c0"/><rect x="62" y="118" width="4" height="1" fill="#d89a20"/><rect x="61" y="119" width="1" height="1" fill="#d89a20"/><rect x="62" y="119" width="4" height="1" fill="#fffbe0"/><rect x="66" y="119" width="1" height="1" fill="#d89a20"/><rect x="60" y="120" width="1" height="10" fill="#d89a20"/><rect x="61" y="120" width="6" height="2" fill="#fff6a0"/><rect x="67" y="120" width="6" height="1" fill="#d89a20"/><rect x="67" y="121" width="5" height="1" fill="#ffffff"/><rect x="72" y="121" width="1" height="1" fill="#d89a20"/><rect x="61" y="122" width="1" height="8" fill="#eab444"/><rect x="62" y="122" width="13" height="1" fill="#d89a20"/><rect x="62" y="123" width="1" height="7" fill="#d89a20"/><rect x="74" y="123" width="1" height="7" fill="#c88410"/><rect x="63" y="123" width="11" height="1" fill="#ffffff"/><rect x="63" y="124" width="11" height="3" fill="#fffa8c"/><rect x="63" y="127" width="11" height="2" fill="#ffd060"/><rect x="62" y="129" width="13" height="1" fill="#c07c08"/></svg></div>
<div class="t" style="left:82px;top:247px"><span class="el">setting</span><span class="nm"> : DiagGeneralErrLvlProcUnitErr</span></div>
<div class="vline" style="left:40px;top:266px;height:19px"></div>
<div class="hline" style="left:46px;top:275px;width:14px"></div>
<div class="box p" style="left:36px;top:271px"></div>
<div class="fold" style="left:59px;top:267px;line-height:0"><svg class="fold" width="18" height="16" viewBox="59 117 18 16" shape-rendering="crispEdges"><rect x="75" y="123" width="1" height="7" fill="#5a6270" opacity=".75"/><rect x="61" y="130" width="15" height="1" fill="#5a6270" opacity=".7"/><rect x="62" y="131" width="13" height="1" fill="#9aa0aa" opacity=".45"/><rect x="66" y="118" width="2" height="1" fill="#a8b0c0"/><rect x="73" y="120" width="1" height="2" fill="#a8b0c0"/><rect x="62" y="118" width="4" height="1" fill="#d89a20"/><rect x="61" y="119" width="1" height="1" fill="#d89a20"/><rect x="62" y="119" width="4" height="1" fill="#fffbe0"/><rect x="66" y="119" width="1" height="1" fill="#d89a20"/><rect x="60" y="120" width="1" height="10" fill="#d89a20"/><rect x="61" y="120" width="6" height="2" fill="#fff6a0"/><rect x="67" y="120" width="6" height="1" fill="#d89a20"/><rect x="67" y="121" width="5" height="1" fill="#ffffff"/><rect x="72" y="121" width="1" height="1" fill="#d89a20"/><rect x="61" y="122" width="1" height="8" fill="#eab444"/><rect x="62" y="122" width="13" height="1" fill="#d89a20"/><rect x="62" y="123" width="1" height="7" fill="#d89a20"/><rect x="74" y="123" width="1" height="7" fill="#c88410"/><rect x="63" y="123" width="11" height="1" fill="#ffffff"/><rect x="63" y="124" width="11" height="3" fill="#fffa8c"/><rect x="63" y="127" width="11" height="2" fill="#ffd060"/><rect x="62" y="129" width="13" height="1" fill="#c07c08"/></svg></div>
<div class="t" style="left:82px;top:266px"><span class="el">setting</span><span class="nm"> : DiagGeneralWarnLvlProcUnitErr</span></div>
<div class="vline" style="left:40px;top:285px;height:19px"></div>
<div class="hline" style="left:46px;top:294px;width:14px"></div>
<div class="box p" style="left:36px;top:290px"></div>
<div class="fold" style="left:59px;top:286px;line-height:0"><svg class="fold" width="18" height="16" viewBox="59 117 18 16" shape-rendering="crispEdges"><rect x="75" y="123" width="1" height="7" fill="#5a6270" opacity=".75"/><rect x="61" y="130" width="15" height="1" fill="#5a6270" opacity=".7"/><rect x="62" y="131" width="13" height="1" fill="#9aa0aa" opacity=".45"/><rect x="66" y="118" width="2" height="1" fill="#a8b0c0"/><rect x="73" y="120" width="1" height="2" fill="#a8b0c0"/><rect x="62" y="118" width="4" height="1" fill="#d89a20"/><rect x="61" y="119" width="1" height="1" fill="#d89a20"/><rect x="62" y="119" width="4" height="1" fill="#fffbe0"/><rect x="66" y="119" width="1" height="1" fill="#d89a20"/><rect x="60" y="120" width="1" height="10" fill="#d89a20"/><rect x="61" y="120" width="6" height="2" fill="#fff6a0"/><rect x="67" y="120" width="6" height="1" fill="#d89a20"/><rect x="67" y="121" width="5" height="1" fill="#ffffff"/><rect x="72" y="121" width="1" height="1" fill="#d89a20"/><rect x="61" y="122" width="1" height="8" fill="#eab444"/><rect x="62" y="122" width="13" height="1" fill="#d89a20"/><rect x="62" y="123" width="1" height="7" fill="#d89a20"/><rect x="74" y="123" width="1" height="7" fill="#c88410"/><rect x="63" y="123" width="11" height="1" fill="#ffffff"/><rect x="63" y="124" width="11" height="3" fill="#fffa8c"/><rect x="63" y="127" width="11" height="2" fill="#ffd060"/><rect x="62" y="129" width="13" height="1" fill="#c07c08"/></svg></div>
<div class="t" style="left:82px;top:285px"><span class="el">setting</span><span class="nm"> : MasterDebugMessageLevel</span></div>
<div class="vline" style="left:40px;top:304px;height:19px"></div>
<div class="hline" style="left:46px;top:313px;width:14px"></div>
<div class="box" style="left:36px;top:309px"></div>
<div class="fold" style="left:59px;top:305px;line-height:0"><svg class="fold" width="18" height="16" viewBox="59 117 18 16" shape-rendering="crispEdges"><rect x="75" y="123" width="1" height="7" fill="#5a6270" opacity=".75"/><rect x="61" y="130" width="15" height="1" fill="#5a6270" opacity=".7"/><rect x="62" y="131" width="13" height="1" fill="#9aa0aa" opacity=".45"/><rect x="66" y="118" width="2" height="1" fill="#a8b0c0"/><rect x="73" y="120" width="1" height="2" fill="#a8b0c0"/><rect x="62" y="118" width="4" height="1" fill="#d89a20"/><rect x="61" y="119" width="1" height="1" fill="#d89a20"/><rect x="62" y="119" width="4" height="1" fill="#fffbe0"/><rect x="66" y="119" width="1" height="1" fill="#d89a20"/><rect x="60" y="120" width="1" height="10" fill="#d89a20"/><rect x="61" y="120" width="6" height="2" fill="#fff6a0"/><rect x="67" y="120" width="6" height="1" fill="#d89a20"/><rect x="67" y="121" width="5" height="1" fill="#ffffff"/><rect x="72" y="121" width="1" height="1" fill="#d89a20"/><rect x="61" y="122" width="1" height="8" fill="#eab444"/><rect x="62" y="122" width="13" height="1" fill="#d89a20"/><rect x="62" y="123" width="1" height="7" fill="#d89a20"/><rect x="74" y="123" width="1" height="7" fill="#c88410"/><rect x="63" y="123" width="11" height="1" fill="#ffffff"/><rect x="63" y="124" width="11" height="3" fill="#fffa8c"/><rect x="63" y="127" width="11" height="2" fill="#ffd060"/><rect x="62" y="129" width="13" height="1" fill="#c07c08"/></svg></div>
<div class="t" style="left:82px;top:304px"><span class="el">setting</span><span class="nm"> : GuiDebugMessageLevel</span></div>
<div class="vline" style="left:40px;top:323px;height:19px"></div>
<div class="hline" style="left:68px;top:332px;width:19px"></div>
<div class="ball" style="left:89px;top:324px;line-height:0"><svg class="ball" width="16" height="18" viewBox="0 0 16 18"><defs><radialGradient id="bg" cx="0.72" cy="0.28" r="0.85"><stop offset="0" stop-color="#ff7a5a"/><stop offset="0.45" stop-color="#ff3c06"/><stop offset="1" stop-color="#c42c02"/></radialGradient><radialGradient id="sh" cx="0.5" cy="0.5" r="0.5"><stop offset="0" stop-color="#000" stop-opacity="0.32"/><stop offset="0.6" stop-color="#000" stop-opacity="0.15"/><stop offset="1" stop-color="#000" stop-opacity="0"/></radialGradient></defs><ellipse cx="6.8" cy="10.2" rx="7" ry="7" fill="url(#sh)"/><circle cx="8" cy="8" r="5.9" fill="url(#bg)"/></svg></div>
<div class="t at" style="left:109px;top:323px">name</div>
<div class="vline" style="left:40px;top:342px;height:19px"></div>
<div class="hline" style="left:68px;top:351px;width:19px"></div>
<div class="ball" style="left:89px;top:343px;line-height:0"><svg class="ball" width="16" height="18" viewBox="0 0 16 18"><defs><radialGradient id="bg" cx="0.72" cy="0.28" r="0.85"><stop offset="0" stop-color="#ff7a5a"/><stop offset="0.45" stop-color="#ff3c06"/><stop offset="1" stop-color="#c42c02"/></radialGradient><radialGradient id="sh" cx="0.5" cy="0.5" r="0.5"><stop offset="0" stop-color="#000" stop-opacity="0.32"/><stop offset="0.6" stop-color="#000" stop-opacity="0.15"/><stop offset="1" stop-color="#000" stop-opacity="0"/></radialGradient></defs><ellipse cx="6.8" cy="10.2" rx="7" ry="7" fill="url(#sh)"/><circle cx="8" cy="8" r="5.9" fill="url(#bg)"/></svg></div>
<div class="t at" style="left:109px;top:342px">value</div>
<div class="vline" style="left:40px;top:361px;height:19px"></div>
<div class="hline" style="left:46px;top:370px;width:14px"></div>
<div class="box p" style="left:36px;top:366px"></div>
<div class="fold" style="left:59px;top:362px;line-height:0"><svg class="fold" width="18" height="16" viewBox="59 117 18 16" shape-rendering="crispEdges"><rect x="75" y="123" width="1" height="7" fill="#5a6270" opacity=".75"/><rect x="61" y="130" width="15" height="1" fill="#5a6270" opacity=".7"/><rect x="62" y="131" width="13" height="1" fill="#9aa0aa" opacity=".45"/><rect x="66" y="118" width="2" height="1" fill="#a8b0c0"/><rect x="73" y="120" width="1" height="2" fill="#a8b0c0"/><rect x="62" y="118" width="4" height="1" fill="#d89a20"/><rect x="61" y="119" width="1" height="1" fill="#d89a20"/><rect x="62" y="119" width="4" height="1" fill="#fffbe0"/><rect x="66" y="119" width="1" height="1" fill="#d89a20"/><rect x="60" y="120" width="1" height="10" fill="#d89a20"/><rect x="61" y="120" width="6" height="2" fill="#fff6a0"/><rect x="67" y="120" width="6" height="1" fill="#d89a20"/><rect x="67" y="121" width="5" height="1" fill="#ffffff"/><rect x="72" y="121" width="1" height="1" fill="#d89a20"/><rect x="61" y="122" width="1" height="8" fill="#eab444"/><rect x="62" y="122" width="13" height="1" fill="#d89a20"/><rect x="62" y="123" width="1" height="7" fill="#d89a20"/><rect x="74" y="123" width="1" height="7" fill="#c88410"/><rect x="63" y="123" width="11" height="1" fill="#ffffff"/><rect x="63" y="124" width="11" height="3" fill="#fffa8c"/><rect x="63" y="127" width="11" height="2" fill="#ffd060"/><rect x="62" y="129" width="13" height="1" fill="#c07c08"/></svg></div>
<div class="t" style="left:82px;top:361px"><span class="el">setting</span><span class="nm"> : IndentXmlFiles</span></div>
<div class="vline" style="left:40px;top:380px;height:19px"></div>
<div class="hline" style="left:46px;top:389px;width:14px"></div>
<div class="box p" style="left:36px;top:385px"></div>
<div class="fold" style="left:59px;top:381px;line-height:0"><svg class="fold" width="18" height="16" viewBox="59 117 18 16" shape-rendering="crispEdges"><rect x="75" y="123" width="1" height="7" fill="#5a6270" opacity=".75"/><rect x="61" y="130" width="15" height="1" fill="#5a6270" opacity=".7"/><rect x="62" y="131" width="13" height="1" fill="#9aa0aa" opacity=".45"/><rect x="66" y="118" width="2" height="1" fill="#a8b0c0"/><rect x="73" y="120" width="1" height="2" fill="#a8b0c0"/><rect x="62" y="118" width="4" height="1" fill="#d89a20"/><rect x="61" y="119" width="1" height="1" fill="#d89a20"/><rect x="62" y="119" width="4" height="1" fill="#fffbe0"/><rect x="66" y="119" width="1" height="1" fill="#d89a20"/><rect x="60" y="120" width="1" height="10" fill="#d89a20"/><rect x="61" y="120" width="6" height="2" fill="#fff6a0"/><rect x="67" y="120" width="6" height="1" fill="#d89a20"/><rect x="67" y="121" width="5" height="1" fill="#ffffff"/><rect x="72" y="121" width="1" height="1" fill="#d89a20"/><rect x="61" y="122" width="1" height="8" fill="#eab444"/><rect x="62" y="122" width="13" height="1" fill="#d89a20"/><rect x="62" y="123" width="1" height="7" fill="#d89a20"/><rect x="74" y="123" width="1" height="7" fill="#c88410"/><rect x="63" y="123" width="11" height="1" fill="#ffffff"/><rect x="63" y="124" width="11" height="3" fill="#fffa8c"/><rect x="63" y="127" width="11" height="2" fill="#ffd060"/><rect x="62" y="129" width="13" height="1" fill="#c07c08"/></svg></div>
<div class="t" style="left:82px;top:380px"><span class="el">setting</span><span class="nm"> : EnhancedUtf8Support</span></div>
<div class="vline" style="left:40px;top:399px;height:19px"></div>
<div class="hline" style="left:46px;top:408px;width:14px"></div>
<div class="box p" style="left:36px;top:404px"></div>
<div class="fold" style="left:59px;top:400px;line-height:0"><svg class="fold" width="18" height="16" viewBox="59 117 18 16" shape-rendering="crispEdges"><rect x="75" y="123" width="1" height="7" fill="#5a6270" opacity=".75"/><rect x="61" y="130" width="15" height="1" fill="#5a6270" opacity=".7"/><rect x="62" y="131" width="13" height="1" fill="#9aa0aa" opacity=".45"/><rect x="66" y="118" width="2" height="1" fill="#a8b0c0"/><rect x="73" y="120" width="1" height="2" fill="#a8b0c0"/><rect x="62" y="118" width="4" height="1" fill="#d89a20"/><rect x="61" y="119" width="1" height="1" fill="#d89a20"/><rect x="62" y="119" width="4" height="1" fill="#fffbe0"/><rect x="66" y="119" width="1" height="1" fill="#d89a20"/><rect x="60" y="120" width="1" height="10" fill="#d89a20"/><rect x="61" y="120" width="6" height="2" fill="#fff6a0"/><rect x="67" y="120" width="6" height="1" fill="#d89a20"/><rect x="67" y="121" width="5" height="1" fill="#ffffff"/><rect x="72" y="121" width="1" height="1" fill="#d89a20"/><rect x="61" y="122" width="1" height="8" fill="#eab444"/><rect x="62" y="122" width="13" height="1" fill="#d89a20"/><rect x="62" y="123" width="1" height="7" fill="#d89a20"/><rect x="74" y="123" width="1" height="7" fill="#c88410"/><rect x="63" y="123" width="11" height="1" fill="#ffffff"/><rect x="63" y="124" width="11" height="3" fill="#fffa8c"/><rect x="63" y="127" width="11" height="2" fill="#ffd060"/><rect x="62" y="129" width="13" height="1" fill="#c07c08"/></svg></div>
<div class="t" style="left:82px;top:399px"><span class="el">setting</span><span class="nm"> : ProjectTemplatePath</span></div>
<div class="vline" style="left:40px;top:418px;height:19px"></div>
<div class="hline" style="left:46px;top:427px;width:14px"></div>
<div class="box p" style="left:36px;top:423px"></div>
<div class="fold" style="left:59px;top:419px;line-height:0"><svg class="fold" width="18" height="16" viewBox="59 117 18 16" shape-rendering="crispEdges"><rect x="75" y="123" width="1" height="7" fill="#5a6270" opacity=".75"/><rect x="61" y="130" width="15" height="1" fill="#5a6270" opacity=".7"/><rect x="62" y="131" width="13" height="1" fill="#9aa0aa" opacity=".45"/><rect x="66" y="118" width="2" height="1" fill="#a8b0c0"/><rect x="73" y="120" width="1" height="2" fill="#a8b0c0"/><rect x="62" y="118" width="4" height="1" fill="#d89a20"/><rect x="61" y="119" width="1" height="1" fill="#d89a20"/><rect x="62" y="119" width="4" height="1" fill="#fffbe0"/><rect x="66" y="119" width="1" height="1" fill="#d89a20"/><rect x="60" y="120" width="1" height="10" fill="#d89a20"/><rect x="61" y="120" width="6" height="2" fill="#fff6a0"/><rect x="67" y="120" width="6" height="1" fill="#d89a20"/><rect x="67" y="121" width="5" height="1" fill="#ffffff"/><rect x="72" y="121" width="1" height="1" fill="#d89a20"/><rect x="61" y="122" width="1" height="8" fill="#eab444"/><rect x="62" y="122" width="13" height="1" fill="#d89a20"/><rect x="62" y="123" width="1" height="7" fill="#d89a20"/><rect x="74" y="123" width="1" height="7" fill="#c88410"/><rect x="63" y="123" width="11" height="1" fill="#ffffff"/><rect x="63" y="124" width="11" height="3" fill="#fffa8c"/><rect x="63" y="127" width="11" height="2" fill="#ffd060"/><rect x="62" y="129" width="13" height="1" fill="#c07c08"/></svg></div>
<div class="t" style="left:82px;top:418px"><span class="el">setting</span><span class="nm"> : ProjectTemplateActivate</span></div>
<div class="vline" style="left:40px;top:437px;height:19px"></div>
<div class="hline" style="left:46px;top:446px;width:14px"></div>
<div class="box p" style="left:36px;top:442px"></div>
<div class="fold" style="left:59px;top:438px;line-height:0"><svg class="fold" width="18" height="16" viewBox="59 117 18 16" shape-rendering="crispEdges"><rect x="75" y="123" width="1" height="7" fill="#5a6270" opacity=".75"/><rect x="61" y="130" width="15" height="1" fill="#5a6270" opacity=".7"/><rect x="62" y="131" width="13" height="1" fill="#9aa0aa" opacity=".45"/><rect x="66" y="118" width="2" height="1" fill="#a8b0c0"/><rect x="73" y="120" width="1" height="2" fill="#a8b0c0"/><rect x="62" y="118" width="4" height="1" fill="#d89a20"/><rect x="61" y="119" width="1" height="1" fill="#d89a20"/><rect x="62" y="119" width="4" height="1" fill="#fffbe0"/><rect x="66" y="119" width="1" height="1" fill="#d89a20"/><rect x="60" y="120" width="1" height="10" fill="#d89a20"/><rect x="61" y="120" width="6" height="2" fill="#fff6a0"/><rect x="67" y="120" width="6" height="1" fill="#d89a20"/><rect x="67" y="121" width="5" height="1" fill="#ffffff"/><rect x="72" y="121" width="1" height="1" fill="#d89a20"/><rect x="61" y="122" width="1" height="8" fill="#eab444"/><rect x="62" y="122" width="13" height="1" fill="#d89a20"/><rect x="62" y="123" width="1" height="7" fill="#d89a20"/><rect x="74" y="123" width="1" height="7" fill="#c88410"/><rect x="63" y="123" width="11" height="1" fill="#ffffff"/><rect x="63" y="124" width="11" height="3" fill="#fffa8c"/><rect x="63" y="127" width="11" height="2" fill="#ffd060"/><rect x="62" y="129" width="13" height="1" fill="#c07c08"/></svg></div>
<div class="t" style="left:82px;top:437px"><span class="el">setting</span><span class="nm"> : ProjectTemplateIgnoreRevision</span></div>
<div class="vline" style="left:40px;top:456px;height:19px"></div>
<div class="hline" style="left:46px;top:465px;width:14px"></div>
<div class="box p" style="left:36px;top:461px"></div>
<div class="fold" style="left:59px;top:457px;line-height:0"><svg class="fold" width="18" height="16" viewBox="59 117 18 16" shape-rendering="crispEdges"><rect x="75" y="123" width="1" height="7" fill="#5a6270" opacity=".75"/><rect x="61" y="130" width="15" height="1" fill="#5a6270" opacity=".7"/><rect x="62" y="131" width="13" height="1" fill="#9aa0aa" opacity=".45"/><rect x="66" y="118" width="2" height="1" fill="#a8b0c0"/><rect x="73" y="120" width="1" height="2" fill="#a8b0c0"/><rect x="62" y="118" width="4" height="1" fill="#d89a20"/><rect x="61" y="119" width="1" height="1" fill="#d89a20"/><rect x="62" y="119" width="4" height="1" fill="#fffbe0"/><rect x="66" y="119" width="1" height="1" fill="#d89a20"/><rect x="60" y="120" width="1" height="10" fill="#d89a20"/><rect x="61" y="120" width="6" height="2" fill="#fff6a0"/><rect x="67" y="120" width="6" height="1" fill="#d89a20"/><rect x="67" y="121" width="5" height="1" fill="#ffffff"/><rect x="72" y="121" width="1" height="1" fill="#d89a20"/><rect x="61" y="122" width="1" height="8" fill="#eab444"/><rect x="62" y="122" width="13" height="1" fill="#d89a20"/><rect x="62" y="123" width="1" height="7" fill="#d89a20"/><rect x="74" y="123" width="1" height="7" fill="#c88410"/><rect x="63" y="123" width="11" height="1" fill="#ffffff"/><rect x="63" y="124" width="11" height="3" fill="#fffa8c"/><rect x="63" y="127" width="11" height="2" fill="#ffd060"/><rect x="62" y="129" width="13" height="1" fill="#c07c08"/></svg></div>
<div class="t" style="left:82px;top:456px"><span class="el">setting</span><span class="nm"> : CaptureFileSettingsFolder</span></div>
<div class="vline" style="left:40px;top:475px;height:19px"></div>
<div class="hline" style="left:46px;top:484px;width:14px"></div>
<div class="box p" style="left:36px;top:480px"></div>
<div class="fold" style="left:59px;top:476px;line-height:0"><svg class="fold" width="18" height="16" viewBox="59 117 18 16" shape-rendering="crispEdges"><rect x="75" y="123" width="1" height="7" fill="#5a6270" opacity=".75"/><rect x="61" y="130" width="15" height="1" fill="#5a6270" opacity=".7"/><rect x="62" y="131" width="13" height="1" fill="#9aa0aa" opacity=".45"/><rect x="66" y="118" width="2" height="1" fill="#a8b0c0"/><rect x="73" y="120" width="1" height="2" fill="#a8b0c0"/><rect x="62" y="118" width="4" height="1" fill="#d89a20"/><rect x="61" y="119" width="1" height="1" fill="#d89a20"/><rect x="62" y="119" width="4" height="1" fill="#fffbe0"/><rect x="66" y="119" width="1" height="1" fill="#d89a20"/><rect x="60" y="120" width="1" height="10" fill="#d89a20"/><rect x="61" y="120" width="6" height="2" fill="#fff6a0"/><rect x="67" y="120" width="6" height="1" fill="#d89a20"/><rect x="67" y="121" width="5" height="1" fill="#ffffff"/><rect x="72" y="121" width="1" height="1" fill="#d89a20"/><rect x="61" y="122" width="1" height="8" fill="#eab444"/><rect x="62" y="122" width="13" height="1" fill="#d89a20"/><rect x="62" y="123" width="1" height="7" fill="#d89a20"/><rect x="74" y="123" width="1" height="7" fill="#c88410"/><rect x="63" y="123" width="11" height="1" fill="#ffffff"/><rect x="63" y="124" width="11" height="3" fill="#fffa8c"/><rect x="63" y="127" width="11" height="2" fill="#ffd060"/><rect x="62" y="129" width="13" height="1" fill="#c07c08"/></svg></div>
<div class="t" style="left:82px;top:475px"><span class="el">setting</span><span class="nm"> : CaptureFileSettingsBaseFileName</span></div>
<div class="vline" style="left:40px;top:494px;height:19px"></div>
<div class="hline" style="left:46px;top:503px;width:14px"></div>
<div class="box p" style="left:36px;top:499px"></div>
<div class="fold" style="left:59px;top:495px;line-height:0"><svg class="fold" width="18" height="16" viewBox="59 117 18 16" shape-rendering="crispEdges"><rect x="75" y="123" width="1" height="7" fill="#5a6270" opacity=".75"/><rect x="61" y="130" width="15" height="1" fill="#5a6270" opacity=".7"/><rect x="62" y="131" width="13" height="1" fill="#9aa0aa" opacity=".45"/><rect x="66" y="118" width="2" height="1" fill="#a8b0c0"/><rect x="73" y="120" width="1" height="2" fill="#a8b0c0"/><rect x="62" y="118" width="4" height="1" fill="#d89a20"/><rect x="61" y="119" width="1" height="1" fill="#d89a20"/><rect x="62" y="119" width="4" height="1" fill="#fffbe0"/><rect x="66" y="119" width="1" height="1" fill="#d89a20"/><rect x="60" y="120" width="1" height="10" fill="#d89a20"/><rect x="61" y="120" width="6" height="2" fill="#fff6a0"/><rect x="67" y="120" width="6" height="1" fill="#d89a20"/><rect x="67" y="121" width="5" height="1" fill="#ffffff"/><rect x="72" y="121" width="1" height="1" fill="#d89a20"/><rect x="61" y="122" width="1" height="8" fill="#eab444"/><rect x="62" y="122" width="13" height="1" fill="#d89a20"/><rect x="62" y="123" width="1" height="7" fill="#d89a20"/><rect x="74" y="123" width="1" height="7" fill="#c88410"/><rect x="63" y="123" width="11" height="1" fill="#ffffff"/><rect x="63" y="124" width="11" height="3" fill="#fffa8c"/><rect x="63" y="127" width="11" height="2" fill="#ffd060"/><rect x="62" y="129" width="13" height="1" fill="#c07c08"/></svg></div>
<div class="t" style="left:82px;top:494px"><span class="el">setting</span><span class="nm"> : CaptureFileSettingsAddDateToFileName</span></div>
<div class="vline" style="left:40px;top:513px;height:19px"></div>
<div class="hline" style="left:46px;top:522px;width:14px"></div>
<div class="box p" style="left:36px;top:518px"></div>
<div class="fold" style="left:59px;top:514px;line-height:0"><svg class="fold" width="18" height="16" viewBox="59 117 18 16" shape-rendering="crispEdges"><rect x="75" y="123" width="1" height="7" fill="#5a6270" opacity=".75"/><rect x="61" y="130" width="15" height="1" fill="#5a6270" opacity=".7"/><rect x="62" y="131" width="13" height="1" fill="#9aa0aa" opacity=".45"/><rect x="66" y="118" width="2" height="1" fill="#a8b0c0"/><rect x="73" y="120" width="1" height="2" fill="#a8b0c0"/><rect x="62" y="118" width="4" height="1" fill="#d89a20"/><rect x="61" y="119" width="1" height="1" fill="#d89a20"/><rect x="62" y="119" width="4" height="1" fill="#fffbe0"/><rect x="66" y="119" width="1" height="1" fill="#d89a20"/><rect x="60" y="120" width="1" height="10" fill="#d89a20"/><rect x="61" y="120" width="6" height="2" fill="#fff6a0"/><rect x="67" y="120" width="6" height="1" fill="#d89a20"/><rect x="67" y="121" width="5" height="1" fill="#ffffff"/><rect x="72" y="121" width="1" height="1" fill="#d89a20"/><rect x="61" y="122" width="1" height="8" fill="#eab444"/><rect x="62" y="122" width="13" height="1" fill="#d89a20"/><rect x="62" y="123" width="1" height="7" fill="#d89a20"/><rect x="74" y="123" width="1" height="7" fill="#c88410"/><rect x="63" y="123" width="11" height="1" fill="#ffffff"/><rect x="63" y="124" width="11" height="3" fill="#fffa8c"/><rect x="63" y="127" width="11" height="2" fill="#ffd060"/><rect x="62" y="129" width="13" height="1" fill="#c07c08"/></svg></div>
<div class="t" style="left:82px;top:513px"><span class="el">setting</span><span class="nm"> : CaptureFileSettingsAddTimeToFileName</span></div>
<div class="vline" style="left:40px;top:532px;height:19px"></div>
<div class="hline" style="left:46px;top:541px;width:14px"></div>
<div class="box p" style="left:36px;top:537px"></div>
<div class="fold" style="left:59px;top:533px;line-height:0"><svg class="fold" width="18" height="16" viewBox="59 117 18 16" shape-rendering="crispEdges"><rect x="75" y="123" width="1" height="7" fill="#5a6270" opacity=".75"/><rect x="61" y="130" width="15" height="1" fill="#5a6270" opacity=".7"/><rect x="62" y="131" width="13" height="1" fill="#9aa0aa" opacity=".45"/><rect x="66" y="118" width="2" height="1" fill="#a8b0c0"/><rect x="73" y="120" width="1" height="2" fill="#a8b0c0"/><rect x="62" y="118" width="4" height="1" fill="#d89a20"/><rect x="61" y="119" width="1" height="1" fill="#d89a20"/><rect x="62" y="119" width="4" height="1" fill="#fffbe0"/><rect x="66" y="119" width="1" height="1" fill="#d89a20"/><rect x="60" y="120" width="1" height="10" fill="#d89a20"/><rect x="61" y="120" width="6" height="2" fill="#fff6a0"/><rect x="67" y="120" width="6" height="1" fill="#d89a20"/><rect x="67" y="121" width="5" height="1" fill="#ffffff"/><rect x="72" y="121" width="1" height="1" fill="#d89a20"/><rect x="61" y="122" width="1" height="8" fill="#eab444"/><rect x="62" y="122" width="13" height="1" fill="#d89a20"/><rect x="62" y="123" width="1" height="7" fill="#d89a20"/><rect x="74" y="123" width="1" height="7" fill="#c88410"/><rect x="63" y="123" width="11" height="1" fill="#ffffff"/><rect x="63" y="124" width="11" height="3" fill="#fffa8c"/><rect x="63" y="127" width="11" height="2" fill="#ffd060"/><rect x="62" y="129" width="13" height="1" fill="#c07c08"/></svg></div>
<div class="t" style="left:82px;top:532px"><span class="el">setting</span><span class="nm"> : CaptureFileSettingsAddIpAddressToFileName</span></div>
<div class="vline" style="left:40px;top:551px;height:19px"></div>
<div class="hline" style="left:46px;top:560px;width:14px"></div>
<div class="box p" style="left:36px;top:556px"></div>
<div class="fold" style="left:59px;top:552px;line-height:0"><svg class="fold" width="18" height="16" viewBox="59 117 18 16" shape-rendering="crispEdges"><rect x="75" y="123" width="1" height="7" fill="#5a6270" opacity=".75"/><rect x="61" y="130" width="15" height="1" fill="#5a6270" opacity=".7"/><rect x="62" y="131" width="13" height="1" fill="#9aa0aa" opacity=".45"/><rect x="66" y="118" width="2" height="1" fill="#a8b0c0"/><rect x="73" y="120" width="1" height="2" fill="#a8b0c0"/><rect x="62" y="118" width="4" height="1" fill="#d89a20"/><rect x="61" y="119" width="1" height="1" fill="#d89a20"/><rect x="62" y="119" width="4" height="1" fill="#fffbe0"/><rect x="66" y="119" width="1" height="1" fill="#d89a20"/><rect x="60" y="120" width="1" height="10" fill="#d89a20"/><rect x="61" y="120" width="6" height="2" fill="#fff6a0"/><rect x="67" y="120" width="6" height="1" fill="#d89a20"/><rect x="67" y="121" width="5" height="1" fill="#ffffff"/><rect x="72" y="121" width="1" height="1" fill="#d89a20"/><rect x="61" y="122" width="1" height="8" fill="#eab444"/><rect x="62" y="122" width="13" height="1" fill="#d89a20"/><rect x="62" y="123" width="1" height="7" fill="#d89a20"/><rect x="74" y="123" width="1" height="7" fill="#c88410"/><rect x="63" y="123" width="11" height="1" fill="#ffffff"/><rect x="63" y="124" width="11" height="3" fill="#fffa8c"/><rect x="63" y="127" width="11" height="2" fill="#ffd060"/><rect x="62" y="129" width="13" height="1" fill="#c07c08"/></svg></div>
<div class="t" style="left:82px;top:551px"><span class="el">setting</span><span class="nm"> : CaptureFileSettingsAutomaticIntervalInSec</span></div>
<div class="vline" style="left:40px;top:570px;height:19px"></div>
<div class="hline" style="left:46px;top:579px;width:14px"></div>
<div class="box p" style="left:36px;top:575px"></div>
<div class="fold" style="left:59px;top:571px;line-height:0"><svg class="fold" width="18" height="16" viewBox="59 117 18 16" shape-rendering="crispEdges"><rect x="75" y="123" width="1" height="7" fill="#5a6270" opacity=".75"/><rect x="61" y="130" width="15" height="1" fill="#5a6270" opacity=".7"/><rect x="62" y="131" width="13" height="1" fill="#9aa0aa" opacity=".45"/><rect x="66" y="118" width="2" height="1" fill="#a8b0c0"/><rect x="73" y="120" width="1" height="2" fill="#a8b0c0"/><rect x="62" y="118" width="4" height="1" fill="#d89a20"/><rect x="61" y="119" width="1" height="1" fill="#d89a20"/><rect x="62" y="119" width="4" height="1" fill="#fffbe0"/><rect x="66" y="119" width="1" height="1" fill="#d89a20"/><rect x="60" y="120" width="1" height="10" fill="#d89a20"/><rect x="61" y="120" width="6" height="2" fill="#fff6a0"/><rect x="67" y="120" width="6" height="1" fill="#d89a20"/><rect x="67" y="121" width="5" height="1" fill="#ffffff"/><rect x="72" y="121" width="1" height="1" fill="#d89a20"/><rect x="61" y="122" width="1" height="8" fill="#eab444"/><rect x="62" y="122" width="13" height="1" fill="#d89a20"/><rect x="62" y="123" width="1" height="7" fill="#d89a20"/><rect x="74" y="123" width="1" height="7" fill="#c88410"/><rect x="63" y="123" width="11" height="1" fill="#ffffff"/><rect x="63" y="124" width="11" height="3" fill="#fffa8c"/><rect x="63" y="127" width="11" height="2" fill="#ffd060"/><rect x="62" y="129" width="13" height="1" fill="#c07c08"/></svg></div>
<div class="t" style="left:82px;top:570px"><span class="el">setting</span><span class="nm"> : CaptureFileSettingsAutomaticNotification</span></div>
<div class="vline" style="left:40px;top:589px;height:19px"></div>
<div class="hline" style="left:46px;top:598px;width:14px"></div>
<div class="box p" style="left:36px;top:594px"></div>
<div class="fold" style="left:59px;top:590px;line-height:0"><svg class="fold" width="18" height="16" viewBox="59 117 18 16" shape-rendering="crispEdges"><rect x="75" y="123" width="1" height="7" fill="#5a6270" opacity=".75"/><rect x="61" y="130" width="15" height="1" fill="#5a6270" opacity=".7"/><rect x="62" y="131" width="13" height="1" fill="#9aa0aa" opacity=".45"/><rect x="66" y="118" width="2" height="1" fill="#a8b0c0"/><rect x="73" y="120" width="1" height="2" fill="#a8b0c0"/><rect x="62" y="118" width="4" height="1" fill="#d89a20"/><rect x="61" y="119" width="1" height="1" fill="#d89a20"/><rect x="62" y="119" width="4" height="1" fill="#fffbe0"/><rect x="66" y="119" width="1" height="1" fill="#d89a20"/><rect x="60" y="120" width="1" height="10" fill="#d89a20"/><rect x="61" y="120" width="6" height="2" fill="#fff6a0"/><rect x="67" y="120" width="6" height="1" fill="#d89a20"/><rect x="67" y="121" width="5" height="1" fill="#ffffff"/><rect x="72" y="121" width="1" height="1" fill="#d89a20"/><rect x="61" y="122" width="1" height="8" fill="#eab444"/><rect x="62" y="122" width="13" height="1" fill="#d89a20"/><rect x="62" y="123" width="1" height="7" fill="#d89a20"/><rect x="74" y="123" width="1" height="7" fill="#c88410"/><rect x="63" y="123" width="11" height="1" fill="#ffffff"/><rect x="63" y="124" width="11" height="3" fill="#fffa8c"/><rect x="63" y="127" width="11" height="2" fill="#ffd060"/><rect x="62" y="129" width="13" height="1" fill="#c07c08"/></svg></div>
<div class="t" style="left:82px;top:589px"><span class="el">setting</span><span class="nm"> : CaptureFileCollectSettingsAutomaticMasterState</span></div>
<div class="vline" style="left:40px;top:608px;height:19px"></div>
<div class="hline" style="left:46px;top:617px;width:14px"></div>
<div class="box p" style="left:36px;top:613px"></div>
<div class="fold" style="left:59px;top:609px;line-height:0"><svg class="fold" width="18" height="16" viewBox="59 117 18 16" shape-rendering="crispEdges"><rect x="75" y="123" width="1" height="7" fill="#5a6270" opacity=".75"/><rect x="61" y="130" width="15" height="1" fill="#5a6270" opacity=".7"/><rect x="62" y="131" width="13" height="1" fill="#9aa0aa" opacity=".45"/><rect x="66" y="118" width="2" height="1" fill="#a8b0c0"/><rect x="73" y="120" width="1" height="2" fill="#a8b0c0"/><rect x="62" y="118" width="4" height="1" fill="#d89a20"/><rect x="61" y="119" width="1" height="1" fill="#d89a20"/><rect x="62" y="119" width="4" height="1" fill="#fffbe0"/><rect x="66" y="119" width="1" height="1" fill="#d89a20"/><rect x="60" y="120" width="1" height="10" fill="#d89a20"/><rect x="61" y="120" width="6" height="2" fill="#fff6a0"/><rect x="67" y="120" width="6" height="1" fill="#d89a20"/><rect x="67" y="121" width="5" height="1" fill="#ffffff"/><rect x="72" y="121" width="1" height="1" fill="#d89a20"/><rect x="61" y="122" width="1" height="8" fill="#eab444"/><rect x="62" y="122" width="13" height="1" fill="#d89a20"/><rect x="62" y="123" width="1" height="7" fill="#d89a20"/><rect x="74" y="123" width="1" height="7" fill="#c88410"/><rect x="63" y="123" width="11" height="1" fill="#ffffff"/><rect x="63" y="124" width="11" height="3" fill="#fffa8c"/><rect x="63" y="127" width="11" height="2" fill="#ffd060"/><rect x="62" y="129" width="13" height="1" fill="#c07c08"/></svg></div>
<div class="t" style="left:82px;top:608px"><span class="el">setting</span><span class="nm"> : CaptureFileCollectSettingsCollectProcessData</span></div>
<div class="vline" style="left:40px;top:627px;height:19px"></div>
<div class="hline" style="left:46px;top:636px;width:14px"></div>
<div class="box p" style="left:36px;top:632px"></div>
<div class="fold" style="left:59px;top:628px;line-height:0"><svg class="fold" width="18" height="16" viewBox="59 117 18 16" shape-rendering="crispEdges"><rect x="75" y="123" width="1" height="7" fill="#5a6270" opacity=".75"/><rect x="61" y="130" width="15" height="1" fill="#5a6270" opacity=".7"/><rect x="62" y="131" width="13" height="1" fill="#9aa0aa" opacity=".45"/><rect x="66" y="118" width="2" height="1" fill="#a8b0c0"/><rect x="73" y="120" width="1" height="2" fill="#a8b0c0"/><rect x="62" y="118" width="4" height="1" fill="#d89a20"/><rect x="61" y="119" width="1" height="1" fill="#d89a20"/><rect x="62" y="119" width="4" height="1" fill="#fffbe0"/><rect x="66" y="119" width="1" height="1" fill="#d89a20"/><rect x="60" y="120" width="1" height="10" fill="#d89a20"/><rect x="61" y="120" width="6" height="2" fill="#fff6a0"/><rect x="67" y="120" width="6" height="1" fill="#d89a20"/><rect x="67" y="121" width="5" height="1" fill="#ffffff"/><rect x="72" y="121" width="1" height="1" fill="#d89a20"/><rect x="61" y="122" width="1" height="8" fill="#eab444"/><rect x="62" y="122" width="13" height="1" fill="#d89a20"/><rect x="62" y="123" width="1" height="7" fill="#d89a20"/><rect x="74" y="123" width="1" height="7" fill="#c88410"/><rect x="63" y="123" width="11" height="1" fill="#ffffff"/><rect x="63" y="124" width="11" height="3" fill="#fffa8c"/><rect x="63" y="127" width="11" height="2" fill="#ffd060"/><rect x="62" y="129" width="13" height="1" fill="#c07c08"/></svg></div>
<div class="t" style="left:82px;top:627px"><span class="el">setting</span><span class="nm"> : CaptureFileCollectSettingsUseSdoInfoServices</span></div>
<div class="vline" style="left:40px;top:646px;height:19px"></div>
<div class="hline" style="left:46px;top:655px;width:14px"></div>
<div class="box p" style="left:36px;top:651px"></div>
<div class="fold" style="left:59px;top:647px;line-height:0"><svg class="fold" width="18" height="16" viewBox="59 117 18 16" shape-rendering="crispEdges"><rect x="75" y="123" width="1" height="7" fill="#5a6270" opacity=".75"/><rect x="61" y="130" width="15" height="1" fill="#5a6270" opacity=".7"/><rect x="62" y="131" width="13" height="1" fill="#9aa0aa" opacity=".45"/><rect x="66" y="118" width="2" height="1" fill="#a8b0c0"/><rect x="73" y="120" width="1" height="2" fill="#a8b0c0"/><rect x="62" y="118" width="4" height="1" fill="#d89a20"/><rect x="61" y="119" width="1" height="1" fill="#d89a20"/><rect x="62" y="119" width="4" height="1" fill="#fffbe0"/><rect x="66" y="119" width="1" height="1" fill="#d89a20"/><rect x="60" y="120" width="1" height="10" fill="#d89a20"/><rect x="61" y="120" width="6" height="2" fill="#fff6a0"/><rect x="67" y="120" width="6" height="1" fill="#d89a20"/><rect x="67" y="121" width="5" height="1" fill="#ffffff"/><rect x="72" y="121" width="1" height="1" fill="#d89a20"/><rect x="61" y="122" width="1" height="8" fill="#eab444"/><rect x="62" y="122" width="13" height="1" fill="#d89a20"/><rect x="62" y="123" width="1" height="7" fill="#d89a20"/><rect x="74" y="123" width="1" height="7" fill="#c88410"/><rect x="63" y="123" width="11" height="1" fill="#ffffff"/><rect x="63" y="124" width="11" height="3" fill="#fffa8c"/><rect x="63" y="127" width="11" height="2" fill="#ffd060"/><rect x="62" y="129" width="13" height="1" fill="#c07c08"/></svg></div>
<div class="t" style="left:82px;top:646px"><span class="el">setting</span><span class="nm"> : CaptureFileCollectSettingsEepromSize</span></div>
<div class="vline" style="left:40px;top:665px;height:19px"></div>
<div class="hline" style="left:46px;top:674px;width:14px"></div>
<div class="box p" style="left:36px;top:670px"></div>
<div class="fold" style="left:59px;top:666px;line-height:0"><svg class="fold" width="18" height="16" viewBox="59 117 18 16" shape-rendering="crispEdges"><rect x="75" y="123" width="1" height="7" fill="#5a6270" opacity=".75"/><rect x="61" y="130" width="15" height="1" fill="#5a6270" opacity=".7"/><rect x="62" y="131" width="13" height="1" fill="#9aa0aa" opacity=".45"/><rect x="66" y="118" width="2" height="1" fill="#a8b0c0"/><rect x="73" y="120" width="1" height="2" fill="#a8b0c0"/><rect x="62" y="118" width="4" height="1" fill="#d89a20"/><rect x="61" y="119" width="1" height="1" fill="#d89a20"/><rect x="62" y="119" width="4" height="1" fill="#fffbe0"/><rect x="66" y="119" width="1" height="1" fill="#d89a20"/><rect x="60" y="120" width="1" height="10" fill="#d89a20"/><rect x="61" y="120" width="6" height="2" fill="#fff6a0"/><rect x="67" y="120" width="6" height="1" fill="#d89a20"/><rect x="67" y="121" width="5" height="1" fill="#ffffff"/><rect x="72" y="121" width="1" height="1" fill="#d89a20"/><rect x="61" y="122" width="1" height="8" fill="#eab444"/><rect x="62" y="122" width="13" height="1" fill="#d89a20"/><rect x="62" y="123" width="1" height="7" fill="#d89a20"/><rect x="74" y="123" width="1" height="7" fill="#c88410"/><rect x="63" y="123" width="11" height="1" fill="#ffffff"/><rect x="63" y="124" width="11" height="3" fill="#fffa8c"/><rect x="63" y="127" width="11" height="2" fill="#ffd060"/><rect x="62" y="129" width="13" height="1" fill="#c07c08"/></svg></div>
<div class="t" style="left:82px;top:665px"><span class="el">setting</span><span class="nm"> : CaptureFileCollectSettingsEscRegisters</span></div>
<div class="vline" style="left:40px;top:684px;height:19px"></div>
<div class="hline" style="left:46px;top:693px;width:14px"></div>
<div class="box p" style="left:36px;top:689px"></div>
<div class="fold" style="left:59px;top:685px;line-height:0"><svg class="fold" width="18" height="16" viewBox="59 117 18 16" shape-rendering="crispEdges"><rect x="75" y="123" width="1" height="7" fill="#5a6270" opacity=".75"/><rect x="61" y="130" width="15" height="1" fill="#5a6270" opacity=".7"/><rect x="62" y="131" width="13" height="1" fill="#9aa0aa" opacity=".45"/><rect x="66" y="118" width="2" height="1" fill="#a8b0c0"/><rect x="73" y="120" width="1" height="2" fill="#a8b0c0"/><rect x="62" y="118" width="4" height="1" fill="#d89a20"/><rect x="61" y="119" width="1" height="1" fill="#d89a20"/><rect x="62" y="119" width="4" height="1" fill="#fffbe0"/><rect x="66" y="119" width="1" height="1" fill="#d89a20"/><rect x="60" y="120" width="1" height="10" fill="#d89a20"/><rect x="61" y="120" width="6" height="2" fill="#fff6a0"/><rect x="67" y="120" width="6" height="1" fill="#d89a20"/><rect x="67" y="121" width="5" height="1" fill="#ffffff"/><rect x="72" y="121" width="1" height="1" fill="#d89a20"/><rect x="61" y="122" width="1" height="8" fill="#eab444"/><rect x="62" y="122" width="13" height="1" fill="#d89a20"/><rect x="62" y="123" width="1" height="7" fill="#d89a20"/><rect x="74" y="123" width="1" height="7" fill="#c88410"/><rect x="63" y="123" width="11" height="1" fill="#ffffff"/><rect x="63" y="124" width="11" height="3" fill="#fffa8c"/><rect x="63" y="127" width="11" height="2" fill="#ffd060"/><rect x="62" y="129" width="13" height="1" fill="#c07c08"/></svg></div>
<div class="t" style="left:82px;top:684px"><span class="el">setting</span><span class="nm"> : CaptureFileCollectSettingsCollectCoeObjects</span></div>
<div class="vline" style="left:40px;top:703px;height:19px"></div>
<div class="hline" style="left:46px;top:712px;width:14px"></div>
<div class="box p" style="left:36px;top:708px"></div>
<div class="fold" style="left:59px;top:704px;line-height:0"><svg class="fold" width="18" height="16" viewBox="59 117 18 16" shape-rendering="crispEdges"><rect x="75" y="123" width="1" height="7" fill="#5a6270" opacity=".75"/><rect x="61" y="130" width="15" height="1" fill="#5a6270" opacity=".7"/><rect x="62" y="131" width="13" height="1" fill="#9aa0aa" opacity=".45"/><rect x="66" y="118" width="2" height="1" fill="#a8b0c0"/><rect x="73" y="120" width="1" height="2" fill="#a8b0c0"/><rect x="62" y="118" width="4" height="1" fill="#d89a20"/><rect x="61" y="119" width="1" height="1" fill="#d89a20"/><rect x="62" y="119" width="4" height="1" fill="#fffbe0"/><rect x="66" y="119" width="1" height="1" fill="#d89a20"/><rect x="60" y="120" width="1" height="10" fill="#d89a20"/><rect x="61" y="120" width="6" height="2" fill="#fff6a0"/><rect x="67" y="120" width="6" height="1" fill="#d89a20"/><rect x="67" y="121" width="5" height="1" fill="#ffffff"/><rect x="72" y="121" width="1" height="1" fill="#d89a20"/><rect x="61" y="122" width="1" height="8" fill="#eab444"/><rect x="62" y="122" width="13" height="1" fill="#d89a20"/><rect x="62" y="123" width="1" height="7" fill="#d89a20"/><rect x="74" y="123" width="1" height="7" fill="#c88410"/><rect x="63" y="123" width="11" height="1" fill="#ffffff"/><rect x="63" y="124" width="11" height="3" fill="#fffa8c"/><rect x="63" y="127" width="11" height="2" fill="#ffd060"/><rect x="62" y="129" width="13" height="1" fill="#c07c08"/></svg></div>
<div class="t" style="left:82px;top:703px"><span class="el">setting</span><span class="nm"> : CaptureFileCollectSettingsCollectCoeObjectDict</span></div>
<div class="vline" style="left:40px;top:722px;height:19px"></div>
<div class="hline" style="left:46px;top:731px;width:14px"></div>
<div class="box p" style="left:36px;top:727px"></div>
<div class="fold" style="left:59px;top:723px;line-height:0"><svg class="fold" width="18" height="16" viewBox="59 117 18 16" shape-rendering="crispEdges"><rect x="75" y="123" width="1" height="7" fill="#5a6270" opacity=".75"/><rect x="61" y="130" width="15" height="1" fill="#5a6270" opacity=".7"/><rect x="62" y="131" width="13" height="1" fill="#9aa0aa" opacity=".45"/><rect x="66" y="118" width="2" height="1" fill="#a8b0c0"/><rect x="73" y="120" width="1" height="2" fill="#a8b0c0"/><rect x="62" y="118" width="4" height="1" fill="#d89a20"/><rect x="61" y="119" width="1" height="1" fill="#d89a20"/><rect x="62" y="119" width="4" height="1" fill="#fffbe0"/><rect x="66" y="119" width="1" height="1" fill="#d89a20"/><rect x="60" y="120" width="1" height="10" fill="#d89a20"/><rect x="61" y="120" width="6" height="2" fill="#fff6a0"/><rect x="67" y="120" width="6" height="1" fill="#d89a20"/><rect x="67" y="121" width="5" height="1" fill="#ffffff"/><rect x="72" y="121" width="1" height="1" fill="#d89a20"/><rect x="61" y="122" width="1" height="8" fill="#eab444"/><rect x="62" y="122" width="13" height="1" fill="#d89a20"/><rect x="62" y="123" width="1" height="7" fill="#d89a20"/><rect x="74" y="123" width="1" height="7" fill="#c88410"/><rect x="63" y="123" width="11" height="1" fill="#ffffff"/><rect x="63" y="124" width="11" height="3" fill="#fffa8c"/><rect x="63" y="127" width="11" height="2" fill="#ffd060"/><rect x="62" y="129" width="13" height="1" fill="#c07c08"/></svg></div>
<div class="t" style="left:82px;top:722px"><span class="el">setting</span><span class="nm"> : TimingTaskRas</span></div>
<div class="vline" style="left:40px;top:741px;height:19px"></div>
<div class="hline" style="left:46px;top:750px;width:14px"></div>
<div class="box p" style="left:36px;top:746px"></div>
<div class="fold" style="left:59px;top:742px;line-height:0"><svg class="fold" width="18" height="16" viewBox="59 117 18 16" shape-rendering="crispEdges"><rect x="75" y="123" width="1" height="7" fill="#5a6270" opacity=".75"/><rect x="61" y="130" width="15" height="1" fill="#5a6270" opacity=".7"/><rect x="62" y="131" width="13" height="1" fill="#9aa0aa" opacity=".45"/><rect x="66" y="118" width="2" height="1" fill="#a8b0c0"/><rect x="73" y="120" width="1" height="2" fill="#a8b0c0"/><rect x="62" y="118" width="4" height="1" fill="#d89a20"/><rect x="61" y="119" width="1" height="1" fill="#d89a20"/><rect x="62" y="119" width="4" height="1" fill="#fffbe0"/><rect x="66" y="119" width="1" height="1" fill="#d89a20"/><rect x="60" y="120" width="1" height="10" fill="#d89a20"/><rect x="61" y="120" width="6" height="2" fill="#fff6a0"/><rect x="67" y="120" width="6" height="1" fill="#d89a20"/><rect x="67" y="121" width="5" height="1" fill="#ffffff"/><rect x="72" y="121" width="1" height="1" fill="#d89a20"/><rect x="61" y="122" width="1" height="8" fill="#eab444"/><rect x="62" y="122" width="13" height="1" fill="#d89a20"/><rect x="62" y="123" width="1" height="7" fill="#d89a20"/><rect x="74" y="123" width="1" height="7" fill="#c88410"/><rect x="63" y="123" width="11" height="1" fill="#ffffff"/><rect x="63" y="124" width="11" height="3" fill="#fffa8c"/><rect x="63" y="127" width="11" height="2" fill="#ffd060"/><rect x="62" y="129" width="13" height="1" fill="#c07c08"/></svg></div>
<div class="t" style="left:82px;top:741px"><span class="el">setting</span><span class="nm"> : AmountOfBufferEntries</span></div>
<div class="vline" style="left:40px;top:760px;height:19px"></div>
<div class="hline" style="left:46px;top:769px;width:14px"></div>
<div class="box p" style="left:36px;top:765px"></div>
<div class="fold" style="left:59px;top:761px;line-height:0"><svg class="fold" width="18" height="16" viewBox="59 117 18 16" shape-rendering="crispEdges"><rect x="75" y="123" width="1" height="7" fill="#5a6270" opacity=".75"/><rect x="61" y="130" width="15" height="1" fill="#5a6270" opacity=".7"/><rect x="62" y="131" width="13" height="1" fill="#9aa0aa" opacity=".45"/><rect x="66" y="118" width="2" height="1" fill="#a8b0c0"/><rect x="73" y="120" width="1" height="2" fill="#a8b0c0"/><rect x="62" y="118" width="4" height="1" fill="#d89a20"/><rect x="61" y="119" width="1" height="1" fill="#d89a20"/><rect x="62" y="119" width="4" height="1" fill="#fffbe0"/><rect x="66" y="119" width="1" height="1" fill="#d89a20"/><rect x="60" y="120" width="1" height="10" fill="#d89a20"/><rect x="61" y="120" width="6" height="2" fill="#fff6a0"/><rect x="67" y="120" width="6" height="1" fill="#d89a20"/><rect x="67" y="121" width="5" height="1" fill="#ffffff"/><rect x="72" y="121" width="1" height="1" fill="#d89a20"/><rect x="61" y="122" width="1" height="8" fill="#eab444"/><rect x="62" y="122" width="13" height="1" fill="#d89a20"/><rect x="62" y="123" width="1" height="7" fill="#d89a20"/><rect x="74" y="123" width="1" height="7" fill="#c88410"/><rect x="63" y="123" width="11" height="1" fill="#ffffff"/><rect x="63" y="124" width="11" height="3" fill="#fffa8c"/><rect x="63" y="127" width="11" height="2" fill="#ffd060"/><rect x="62" y="129" width="13" height="1" fill="#c07c08"/></svg></div>
<div class="t" style="left:82px;top:760px"><span class="el">setting</span><span class="nm"> : PcapFileSettingsFolder</span></div>
<div class="vline" style="left:40px;top:779px;height:19px"></div>
<div class="hline" style="left:46px;top:788px;width:14px"></div>
<div class="box" style="left:36px;top:784px"></div>
<div class="fold" style="left:59px;top:780px;line-height:0"><svg class="fold" width="18" height="16" viewBox="59 117 18 16" shape-rendering="crispEdges"><rect x="75" y="123" width="1" height="7" fill="#5a6270" opacity=".75"/><rect x="61" y="130" width="15" height="1" fill="#5a6270" opacity=".7"/><rect x="62" y="131" width="13" height="1" fill="#9aa0aa" opacity=".45"/><rect x="66" y="118" width="2" height="1" fill="#a8b0c0"/><rect x="73" y="120" width="1" height="2" fill="#a8b0c0"/><rect x="62" y="118" width="4" height="1" fill="#d89a20"/><rect x="61" y="119" width="1" height="1" fill="#d89a20"/><rect x="62" y="119" width="4" height="1" fill="#fffbe0"/><rect x="66" y="119" width="1" height="1" fill="#d89a20"/><rect x="60" y="120" width="1" height="10" fill="#d89a20"/><rect x="61" y="120" width="6" height="2" fill="#fff6a0"/><rect x="67" y="120" width="6" height="1" fill="#d89a20"/><rect x="67" y="121" width="5" height="1" fill="#ffffff"/><rect x="72" y="121" width="1" height="1" fill="#d89a20"/><rect x="61" y="122" width="1" height="8" fill="#eab444"/><rect x="62" y="122" width="13" height="1" fill="#d89a20"/><rect x="62" y="123" width="1" height="7" fill="#d89a20"/><rect x="74" y="123" width="1" height="7" fill="#c88410"/><rect x="63" y="123" width="11" height="1" fill="#ffffff"/><rect x="63" y="124" width="11" height="3" fill="#fffa8c"/><rect x="63" y="127" width="11" height="2" fill="#ffd060"/><rect x="62" y="129" width="13" height="1" fill="#c07c08"/></svg></div>
<div class="abs" style="left:81px;top:779px;width:77px;height:19px;background:#0078d7;outline:1px dotted #000;outline-offset:-1px"></div>
<div class="t" style="left:82px;top:779px"><span style="color:#fff">setting</span><span class="nm"> : PcapFileSettingsBaseFileName</span></div>
<div class="vline" style="left:40px;top:798px;height:19px"></div>
<div class="hline" style="left:68px;top:807px;width:19px"></div>
<div class="ball" style="left:89px;top:799px;line-height:0"><svg class="ball" width="16" height="18" viewBox="0 0 16 18"><defs><radialGradient id="bg" cx="0.72" cy="0.28" r="0.85"><stop offset="0" stop-color="#ff7a5a"/><stop offset="0.45" stop-color="#ff3c06"/><stop offset="1" stop-color="#c42c02"/></radialGradient><radialGradient id="sh" cx="0.5" cy="0.5" r="0.5"><stop offset="0" stop-color="#000" stop-opacity="0.32"/><stop offset="0.6" stop-color="#000" stop-opacity="0.15"/><stop offset="1" stop-color="#000" stop-opacity="0"/></radialGradient></defs><ellipse cx="6.8" cy="10.2" rx="7" ry="7" fill="url(#sh)"/><circle cx="8" cy="8" r="5.9" fill="url(#bg)"/></svg></div>
<div class="t at" style="left:109px;top:798px">name</div>
<div class="vline" style="left:40px;top:817px;height:19px"></div>
<div class="hline" style="left:68px;top:826px;width:19px"></div>
<div class="ball" style="left:89px;top:818px;line-height:0"><svg class="ball" width="16" height="18" viewBox="0 0 16 18"><defs><radialGradient id="bg" cx="0.72" cy="0.28" r="0.85"><stop offset="0" stop-color="#ff7a5a"/><stop offset="0.45" stop-color="#ff3c06"/><stop offset="1" stop-color="#c42c02"/></radialGradient><radialGradient id="sh" cx="0.5" cy="0.5" r="0.5"><stop offset="0" stop-color="#000" stop-opacity="0.32"/><stop offset="0.6" stop-color="#000" stop-opacity="0.15"/><stop offset="1" stop-color="#000" stop-opacity="0"/></radialGradient></defs><ellipse cx="6.8" cy="10.2" rx="7" ry="7" fill="url(#sh)"/><circle cx="8" cy="8" r="5.9" fill="url(#bg)"/></svg></div>
<div class="t at" style="left:109px;top:817px">value</div>
<div class="vline" style="left:40px;top:836px;height:19px"></div>
<div class="hline" style="left:46px;top:845px;width:14px"></div>
<div class="box p" style="left:36px;top:841px"></div>
<div class="fold" style="left:59px;top:837px;line-height:0"><svg class="fold" width="18" height="16" viewBox="59 117 18 16" shape-rendering="crispEdges"><rect x="75" y="123" width="1" height="7" fill="#5a6270" opacity=".75"/><rect x="61" y="130" width="15" height="1" fill="#5a6270" opacity=".7"/><rect x="62" y="131" width="13" height="1" fill="#9aa0aa" opacity=".45"/><rect x="66" y="118" width="2" height="1" fill="#a8b0c0"/><rect x="73" y="120" width="1" height="2" fill="#a8b0c0"/><rect x="62" y="118" width="4" height="1" fill="#d89a20"/><rect x="61" y="119" width="1" height="1" fill="#d89a20"/><rect x="62" y="119" width="4" height="1" fill="#fffbe0"/><rect x="66" y="119" width="1" height="1" fill="#d89a20"/><rect x="60" y="120" width="1" height="10" fill="#d89a20"/><rect x="61" y="120" width="6" height="2" fill="#fff6a0"/><rect x="67" y="120" width="6" height="1" fill="#d89a20"/><rect x="67" y="121" width="5" height="1" fill="#ffffff"/><rect x="72" y="121" width="1" height="1" fill="#d89a20"/><rect x="61" y="122" width="1" height="8" fill="#eab444"/><rect x="62" y="122" width="13" height="1" fill="#d89a20"/><rect x="62" y="123" width="1" height="7" fill="#d89a20"/><rect x="74" y="123" width="1" height="7" fill="#c88410"/><rect x="63" y="123" width="11" height="1" fill="#ffffff"/><rect x="63" y="124" width="11" height="3" fill="#fffa8c"/><rect x="63" y="127" width="11" height="2" fill="#ffd060"/><rect x="62" y="129" width="13" height="1" fill="#c07c08"/></svg></div>
<div class="t" style="left:82px;top:836px"><span class="el">setting</span><span class="nm"> : PcapFileSettingsAddDateToFileName</span></div>
<div class="vline" style="left:68px;top:323px;height:29px"></div>
<div class="vline" style="left:68px;top:798px;height:29px"></div>
</div>
<div class="abs" style="left:546px;top:116px;width:1px;height:844px;background:#a0a0a0"></div>
<div class="abs" style="left:547px;top:116px;width:4px;height:844px;background:#fcfcfc"></div>
<div class="abs" style="left:551px;top:116px;width:1px;height:844px;background:#a0a0a0"></div>
<div id="right">
<div class="wrow" style="top:323px"></div>
<div class="t vl" style="left:4px;top:323px">GuiDebugMessageLevel</div>
<div class="wrow" style="top:342px"></div>
<div class="t vl" style="left:4px;top:342px">0</div>
<div class="abs" style="left:0;top:779px;width:381px;height:19px;outline:1px dotted #000;outline-offset:-1px"></div>
<div class="wrow" style="top:798px"></div>
<div class="t vl" style="left:4px;top:798px">PcapFileSettingsBaseFileName</div>
<div class="wrow" style="top:817px"></div>
<div class="t vl" style="left:4px;top:817px">PcapFile</div>
</div>
<svg class="abs" style="left:43px;top:904px" width="14" height="22" viewBox="0 0 14 22"><path d="M1.5 1.2 V16.2 L5 12.7 L8 19.7 L10.2 18.7 L7.4 11.9 H12.3 Z" fill="#f4f4f4" stroke="#000" stroke-width="1.1" stroke-linejoin="miter"/></svg>
</body></html>
